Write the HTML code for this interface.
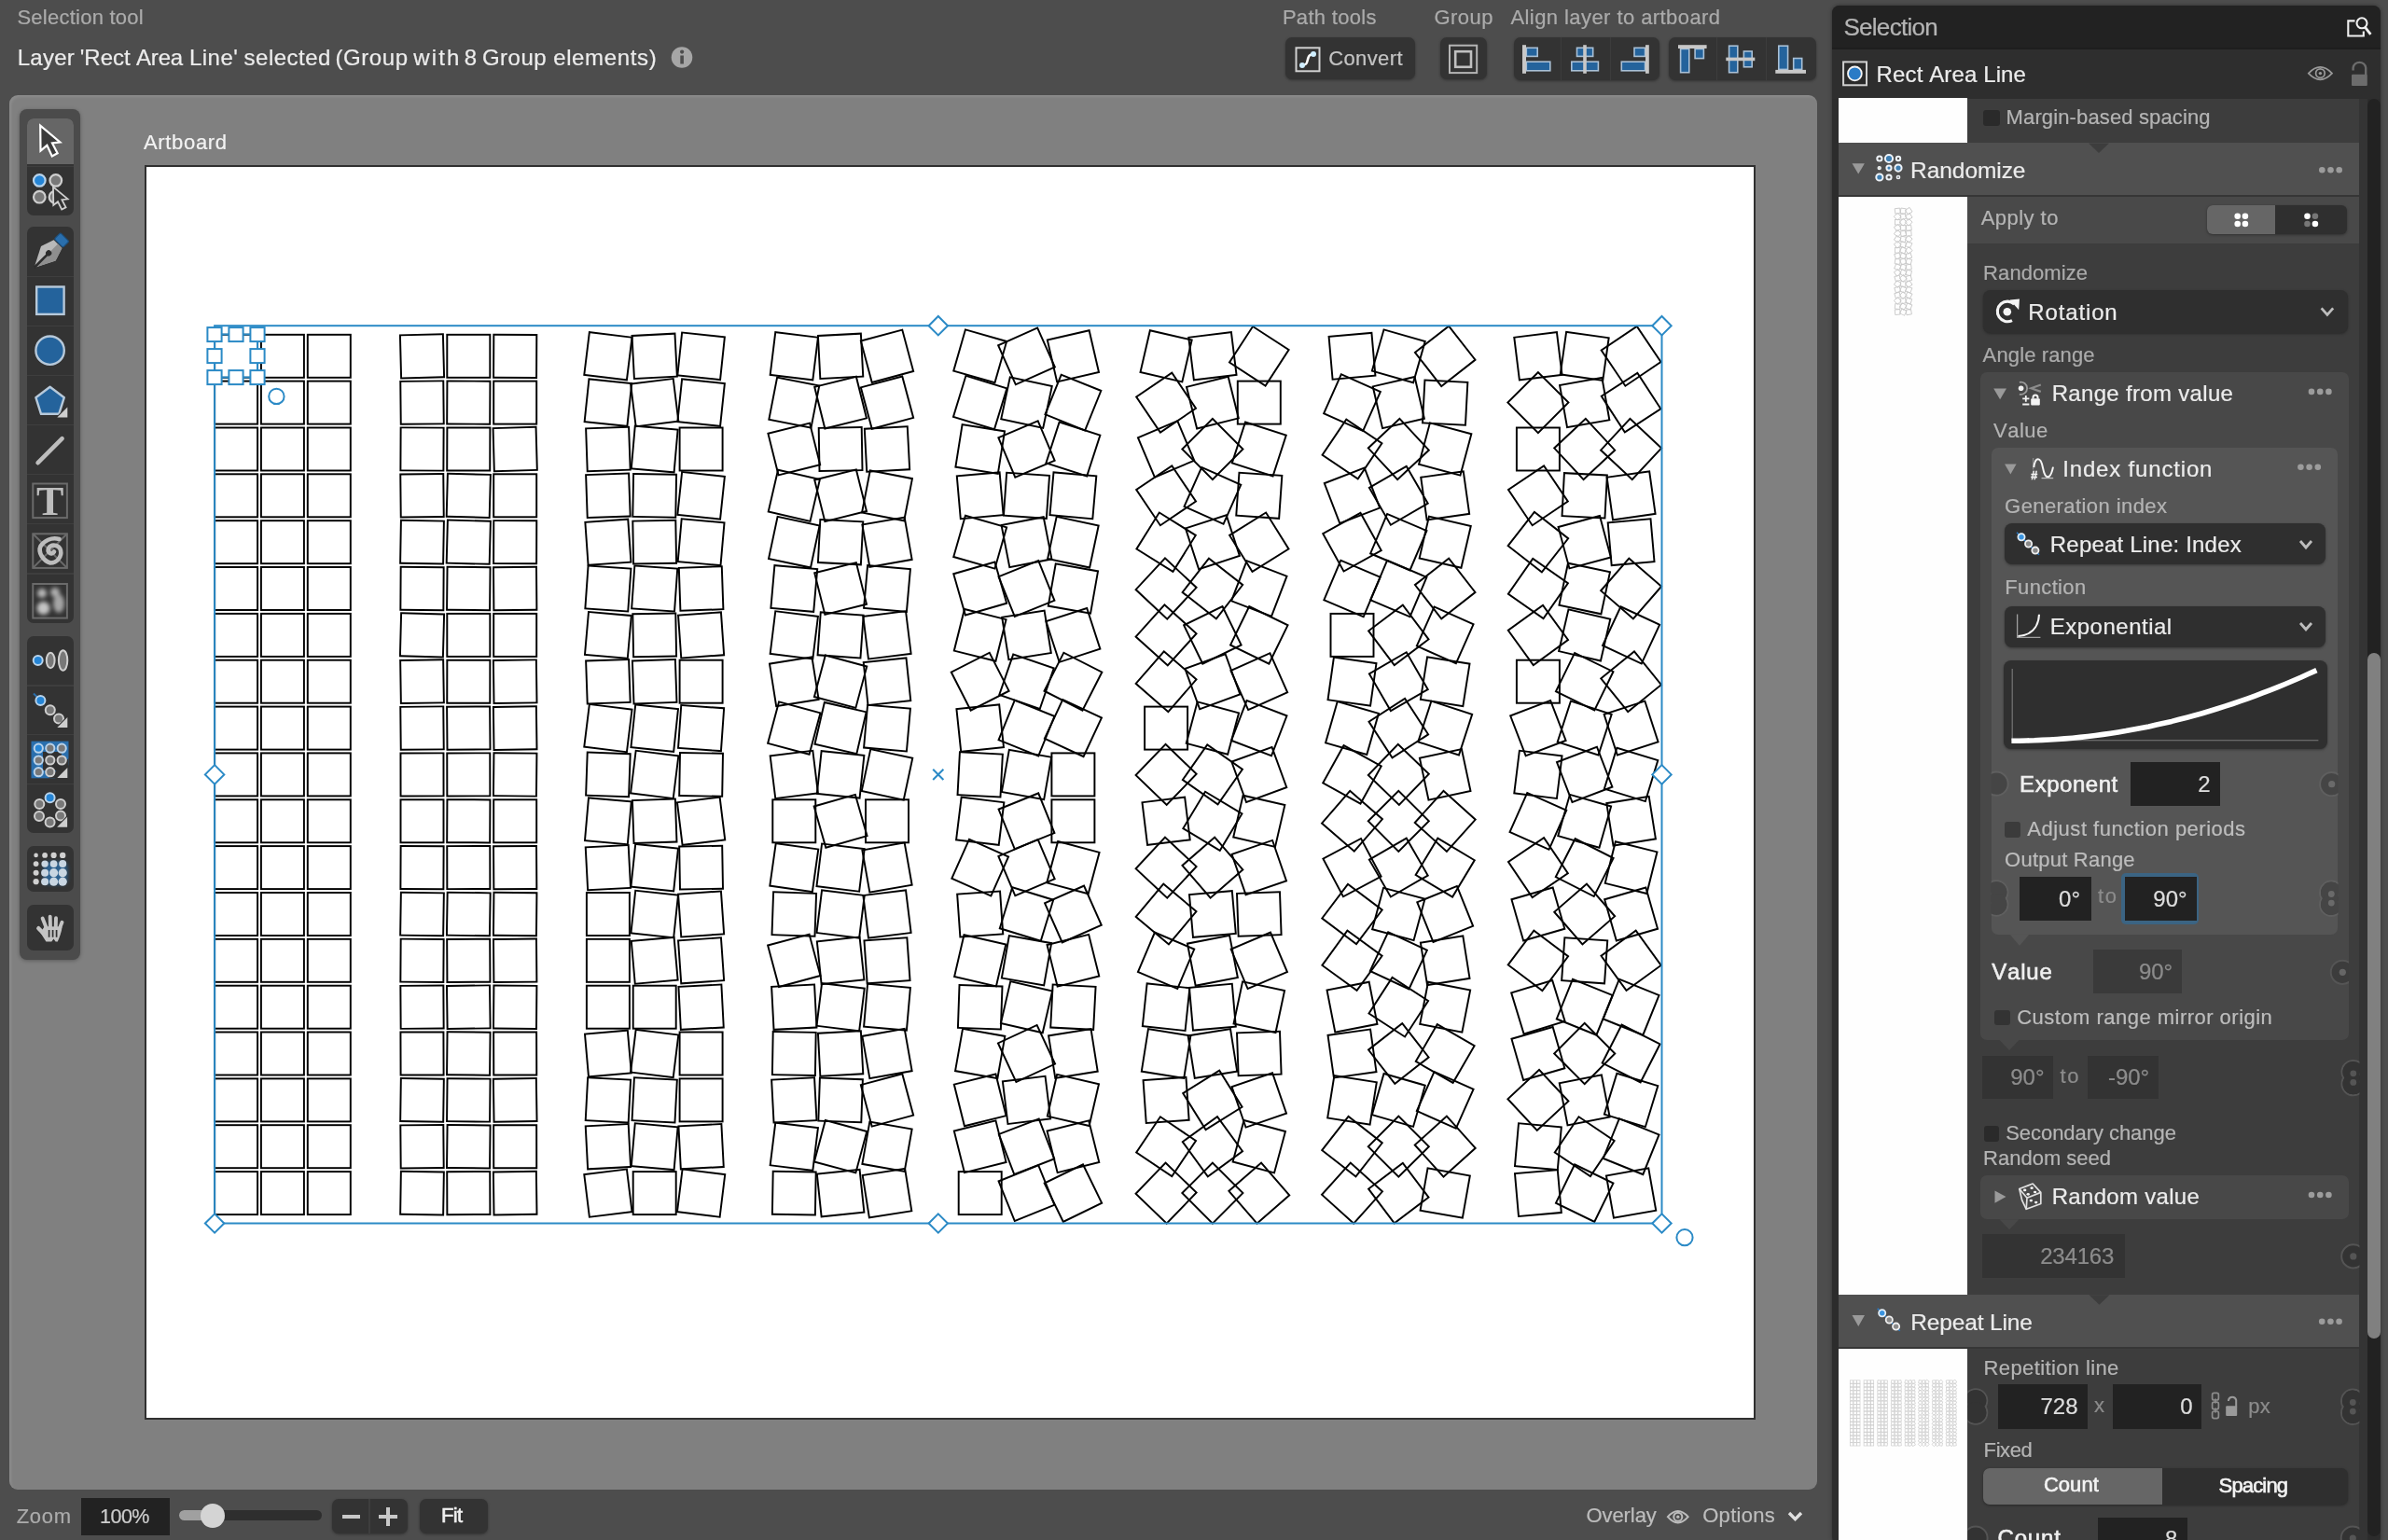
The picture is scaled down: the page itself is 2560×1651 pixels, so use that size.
<!DOCTYPE html>
<html><head><meta charset="utf-8"><title>Selection tool</title>
<style>
html,body{margin:0;padding:0;}
body{width:2560px;height:1651px;overflow:hidden;background:#4d4d4d;position:relative;
font-family:"Liberation Sans",sans-serif;font-kerning:none;}
div,svg,span{position:absolute;}
.t{white-space:pre;}
#root{left:0;top:0;width:2560px;height:1651px;will-change:transform;}
</style></head><body><div id="root">
<span class="t" style="top:-3.1px;font-size:22px;line-height:44px;color:#ababab;letter-spacing:0.25px;-webkit-text-stroke:0.22px #ababab;left:18.4px;">Selection tool</span>
<span class="t" style="left:18.7px;top:38.1px;font-size:24px;line-height:48px;color:#ececec;-webkit-text-stroke:0.22px #ececec;"><span style="position:static;display:inline-block;width:67.0px;letter-spacing:0.27px;">Layer </span><span style="position:static;display:inline-block;width:60.3px;letter-spacing:0.02px;">'Rect </span><span style="position:static;display:inline-block;width:57.0px;letter-spacing:-0.17px;">Area </span><span style="position:static;display:inline-block;width:58.6px;letter-spacing:0.46px;">Line' </span><span style="position:static;display:inline-block;width:98.0px;letter-spacing:0.50px;">selected </span><span style="position:static;display:inline-block;width:83.7px;letter-spacing:0.54px;">(Group </span><span style="position:static;display:inline-block;width:54.5px;letter-spacing:2.11px;">with </span><span style="position:static;display:inline-block;width:19.2px;letter-spacing:0.00px;">8 </span><span style="position:static;display:inline-block;width:76.2px;letter-spacing:0.50px;">Group </span><span style="position:static;display:inline-block;width:113.8px;letter-spacing:0.65px;">elements)</span></span>
<svg style="left:719.0px;top:50.0px;" width="24.0" height="24.0" viewBox="0 0 24.0 24.0"><circle cx="12" cy="11.5" r="11.3" fill="#a6a6a6"/><rect x="10.3" y="9.5" width="3.6" height="9" fill="#4d4d4d"/><circle cx="12.1" cy="5.6" r="2.1" fill="#4d4d4d"/></svg>
<span class="t" style="top:-3.2px;font-size:22px;line-height:44px;color:#ababab;letter-spacing:0.30px;-webkit-text-stroke:0.22px #ababab;left:1374.9px;">Path tools</span>
<span class="t" style="top:-3.2px;font-size:22px;line-height:44px;color:#ababab;letter-spacing:0.41px;-webkit-text-stroke:0.22px #ababab;left:1537.6px;">Group</span>
<span class="t" style="top:-3.2px;font-size:22px;line-height:44px;color:#ababab;letter-spacing:0.43px;-webkit-text-stroke:0.22px #ababab;left:1619.4px;">Align layer to artboard</span>
<div style="left:1377.5px;top:40.3px;width:139.5px;height:45.2px;background:#333333;border-radius:7px;box-shadow:0 1px 3px rgba(0,0,0,.35);"></div>
<svg style="left:1388.0px;top:50.0px;" width="28.0" height="28.0" viewBox="0 0 28.0 28.0"><rect x="1.5" y="1.3" width="25" height="25" fill="none" stroke="#d0d0d0" stroke-width="2"/><path d="M8.5 19.8 C14 19.5 13 16 14 13.5 C15 10.5 15 8.6 19.6 8.2" fill="none" stroke="#fff" stroke-width="2.6" stroke-linecap="round"/><circle cx="8" cy="20" r="3" fill="#cfeeff"/><circle cx="20" cy="8" r="3" fill="#cfeeff"/></svg>
<span class="t" style="top:40.8px;font-size:22px;line-height:44px;color:#c4c4c4;letter-spacing:0.39px;-webkit-text-stroke:0.22px #c4c4c4;left:1424.2px;">Convert</span>
<div style="left:1544.0px;top:40.3px;width:50.0px;height:45.2px;background:#333333;border-radius:7px;box-shadow:0 1px 3px rgba(0,0,0,.35);"></div>
<svg style="left:1550.0px;top:45.0px;" width="38.0" height="38.0" viewBox="0 0 38.0 38.0"><rect x="4" y="3.7" width="29.2" height="29.4" fill="none" stroke="#b4b4b4" stroke-width="2"/><rect x="10.2" y="10.2" width="16.8" height="16.6" fill="none" stroke="#c0c0c0" stroke-width="2.6"/></svg>
<div style="left:1622.6px;top:40.3px;width:156.8px;height:45.6px;background:#333333;border-radius:7px;box-shadow:0 1px 3px rgba(0,0,0,.35);"></div>
<div style="left:1789.2px;top:40.3px;width:157.5px;height:45.6px;background:#333333;border-radius:7px;box-shadow:0 1px 3px rgba(0,0,0,.35);"></div>
<div style="left:1672.6px;top:40.3px;width:1.2px;height:45.6px;background:#3c3c3c;"></div>
<div style="left:1725.8px;top:40.3px;width:1.2px;height:45.6px;background:#3c3c3c;"></div>
<div style="left:1840.0px;top:40.3px;width:1.2px;height:45.6px;background:#3c3c3c;"></div>
<div style="left:1892.7px;top:40.3px;width:1.2px;height:45.6px;background:#3c3c3c;"></div>
<svg style="left:0;top:0" width="2560" height="100" viewBox="0 0 2560 100"><rect x="1636.3" y="51.3" width="11.9" height="9.1" fill="#24639c" stroke="#a9c0d6" stroke-width="1.6"/><rect x="1636.3" y="66.2" width="25.5" height="9.6" fill="#24639c" stroke="#a9c0d6" stroke-width="1.6"/><rect x="1632.0" y="48.2" width="4.0" height="30.6" fill="#c8c8c8"/><rect x="1690.5" y="51.3" width="17.2" height="9.1" fill="#24639c" stroke="#a9c0d6" stroke-width="1.6"/><rect x="1684.8" y="66.2" width="28.6" height="9.6" fill="#24639c" stroke="#a9c0d6" stroke-width="1.6"/><rect x="1697.2" y="48.2" width="3.6" height="30.6" fill="#c8c8c8"/><rect x="1752.0" y="51.3" width="11.6" height="9.1" fill="#24639c" stroke="#a9c0d6" stroke-width="1.6"/><rect x="1738.3" y="66.2" width="25.3" height="9.6" fill="#24639c" stroke="#a9c0d6" stroke-width="1.6"/><rect x="1764.0" y="48.2" width="3.8" height="30.6" fill="#c8c8c8"/><rect x="1801.6" y="52.4" width="9.2" height="25.3" fill="#24639c" stroke="#a9c0d6" stroke-width="1.6"/><rect x="1817.1" y="52.4" width="9.3" height="10.2" fill="#24639c" stroke="#a9c0d6" stroke-width="1.6"/><rect x="1799.0" y="48.2" width="30.6" height="3.8" fill="#c8c8c8"/><rect x="1853.6" y="49.2" width="9.2" height="28.5" fill="#24639c" stroke="#a9c0d6" stroke-width="1.6"/><rect x="1869.4" y="55.0" width="8.8" height="16.8" fill="#24639c" stroke="#a9c0d6" stroke-width="1.6"/><rect x="1850.3" y="61.6" width="31.0" height="3.6" fill="#c8c8c8"/><rect x="1906.8" y="49.2" width="9.8" height="25.2" fill="#24639c" stroke="#a9c0d6" stroke-width="1.6"/><rect x="1922.7" y="62.5" width="9.0" height="11.9" fill="#24639c" stroke="#a9c0d6" stroke-width="1.6"/><rect x="1903.3" y="74.9" width="32.7" height="3.9" fill="#c8c8c8"/></svg>
<div style="left:9.5px;top:101.7px;width:1938.6px;height:1495.3px;background:#808080;border-radius:9px;box-shadow:inset 2px 2px 3px rgba(255,255,255,.10);"></div>
<span class="t" style="top:131.0px;font-size:22px;line-height:44px;color:#f2f2f2;letter-spacing:0.69px;-webkit-text-stroke:0.22px #f2f2f2;left:153.9px;">Artboard</span>
<div style="left:155.0px;top:177.0px;width:1727.0px;height:1344.5px;background:#303030;"></div>
<div style="left:157.0px;top:179.0px;width:1723.0px;height:1340.5px;background:#ffffff;"></div>
<svg style="left:0;top:0" width="1960" height="1600" viewBox="0 0 1960 1600"><g fill="none" stroke="#000" stroke-width="1.95"><rect x="230.1" y="358.8" width="46.0" height="46.0"/><rect x="279.9" y="358.8" width="46.0" height="46.0"/><rect x="329.8" y="358.8" width="46.0" height="46.0"/><rect x="230.1" y="408.6" width="46.0" height="46.0"/><rect x="279.9" y="408.6" width="46.0" height="46.0"/><rect x="329.8" y="408.6" width="46.0" height="46.0"/><rect x="230.1" y="458.5" width="46.0" height="46.0"/><rect x="279.9" y="458.5" width="46.0" height="46.0"/><rect x="329.8" y="458.5" width="46.0" height="46.0"/><rect x="230.1" y="508.3" width="46.0" height="46.0"/><rect x="279.9" y="508.3" width="46.0" height="46.0"/><rect x="329.8" y="508.3" width="46.0" height="46.0"/><rect x="230.1" y="558.2" width="46.0" height="46.0"/><rect x="279.9" y="558.2" width="46.0" height="46.0"/><rect x="329.8" y="558.2" width="46.0" height="46.0"/><rect x="230.1" y="608.0" width="46.0" height="46.0"/><rect x="279.9" y="608.0" width="46.0" height="46.0"/><rect x="329.8" y="608.0" width="46.0" height="46.0"/><rect x="230.1" y="657.9" width="46.0" height="46.0"/><rect x="279.9" y="657.9" width="46.0" height="46.0"/><rect x="329.8" y="657.9" width="46.0" height="46.0"/><rect x="230.1" y="707.7" width="46.0" height="46.0"/><rect x="279.9" y="707.7" width="46.0" height="46.0"/><rect x="329.8" y="707.7" width="46.0" height="46.0"/><rect x="230.1" y="757.6" width="46.0" height="46.0"/><rect x="279.9" y="757.6" width="46.0" height="46.0"/><rect x="329.8" y="757.6" width="46.0" height="46.0"/><rect x="230.1" y="807.4" width="46.0" height="46.0"/><rect x="279.9" y="807.4" width="46.0" height="46.0"/><rect x="329.8" y="807.4" width="46.0" height="46.0"/><rect x="230.1" y="857.3" width="46.0" height="46.0"/><rect x="279.9" y="857.3" width="46.0" height="46.0"/><rect x="329.8" y="857.3" width="46.0" height="46.0"/><rect x="230.1" y="907.1" width="46.0" height="46.0"/><rect x="279.9" y="907.1" width="46.0" height="46.0"/><rect x="329.8" y="907.1" width="46.0" height="46.0"/><rect x="230.1" y="957.0" width="46.0" height="46.0"/><rect x="279.9" y="957.0" width="46.0" height="46.0"/><rect x="329.8" y="957.0" width="46.0" height="46.0"/><rect x="230.1" y="1006.8" width="46.0" height="46.0"/><rect x="279.9" y="1006.8" width="46.0" height="46.0"/><rect x="329.8" y="1006.8" width="46.0" height="46.0"/><rect x="230.1" y="1056.7" width="46.0" height="46.0"/><rect x="279.9" y="1056.7" width="46.0" height="46.0"/><rect x="329.8" y="1056.7" width="46.0" height="46.0"/><rect x="230.1" y="1106.5" width="46.0" height="46.0"/><rect x="279.9" y="1106.5" width="46.0" height="46.0"/><rect x="329.8" y="1106.5" width="46.0" height="46.0"/><rect x="230.1" y="1156.4" width="46.0" height="46.0"/><rect x="279.9" y="1156.4" width="46.0" height="46.0"/><rect x="329.8" y="1156.4" width="46.0" height="46.0"/><rect x="230.1" y="1206.2" width="46.0" height="46.0"/><rect x="279.9" y="1206.2" width="46.0" height="46.0"/><rect x="329.8" y="1206.2" width="46.0" height="46.0"/><rect x="230.1" y="1256.1" width="46.0" height="46.0"/><rect x="279.9" y="1256.1" width="46.0" height="46.0"/><rect x="329.8" y="1256.1" width="46.0" height="46.0"/><rect x="429.5" y="358.8" width="46.0" height="46.0" transform="rotate(-1.5 452.5 381.8)"/><rect x="479.3" y="358.8" width="46.0" height="46.0"/><rect x="529.2" y="358.8" width="46.0" height="46.0" transform="rotate(0.3 552.2 381.8)"/><rect x="429.5" y="408.6" width="46.0" height="46.0" transform="rotate(-0.6 452.5 431.6)"/><rect x="479.3" y="408.6" width="46.0" height="46.0" transform="rotate(0.3 502.3 431.6)"/><rect x="529.2" y="408.6" width="46.0" height="46.0"/><rect x="429.5" y="458.5" width="46.0" height="46.0" transform="rotate(0.3 452.5 481.5)"/><rect x="479.3" y="458.5" width="46.0" height="46.0" transform="rotate(0.2 502.3 481.5)"/><rect x="529.2" y="458.5" width="46.0" height="46.0" transform="rotate(-1.6 552.2 481.5)"/><rect x="429.5" y="508.3" width="46.0" height="46.0" transform="rotate(-0.6 452.5 531.3)"/><rect x="479.3" y="508.3" width="46.0" height="46.0" transform="rotate(1.5 502.3 531.3)"/><rect x="529.2" y="508.3" width="46.0" height="46.0"/><rect x="429.5" y="558.2" width="46.0" height="46.0" transform="rotate(1.0 452.5 581.2)"/><rect x="479.3" y="558.2" width="46.0" height="46.0" transform="rotate(1.5 502.3 581.2)"/><rect x="529.2" y="558.2" width="46.0" height="46.0" transform="rotate(0.2 552.2 581.2)"/><rect x="429.5" y="608.0" width="46.0" height="46.0" transform="rotate(0.4 452.5 631.0)"/><rect x="479.3" y="608.0" width="46.0" height="46.0" transform="rotate(0.6 502.3 631.0)"/><rect x="529.2" y="608.0" width="46.0" height="46.0" transform="rotate(-0.5 552.2 631.0)"/><rect x="429.5" y="657.9" width="46.0" height="46.0" transform="rotate(1.5 452.5 680.9)"/><rect x="479.3" y="657.9" width="46.0" height="46.0"/><rect x="529.2" y="657.9" width="46.0" height="46.0"/><rect x="429.5" y="707.7" width="46.0" height="46.0" transform="rotate(-0.9 452.5 730.7)"/><rect x="479.3" y="707.7" width="46.0" height="46.0" transform="rotate(0.1 502.3 730.7)"/><rect x="529.2" y="707.7" width="46.0" height="46.0" transform="rotate(-0.8 552.2 730.7)"/><rect x="429.5" y="757.6" width="46.0" height="46.0" transform="rotate(-0.6 452.5 780.6)"/><rect x="479.3" y="757.6" width="46.0" height="46.0" transform="rotate(-0.5 502.3 780.6)"/><rect x="529.2" y="757.6" width="46.0" height="46.0" transform="rotate(-0.8 552.2 780.6)"/><rect x="429.5" y="807.4" width="46.0" height="46.0" transform="rotate(-0.1 452.5 830.4)"/><rect x="479.3" y="807.4" width="46.0" height="46.0" transform="rotate(-0.1 502.3 830.4)"/><rect x="529.2" y="807.4" width="46.0" height="46.0" transform="rotate(0.6 552.2 830.4)"/><rect x="429.5" y="857.3" width="46.0" height="46.0"/><rect x="479.3" y="857.3" width="46.0" height="46.0" transform="rotate(0.3 502.3 880.3)"/><rect x="529.2" y="857.3" width="46.0" height="46.0"/><rect x="429.5" y="907.1" width="46.0" height="46.0" transform="rotate(0.3 452.5 930.1)"/><rect x="479.3" y="907.1" width="46.0" height="46.0" transform="rotate(-0.1 502.3 930.1)"/><rect x="529.2" y="907.1" width="46.0" height="46.0" transform="rotate(-0.4 552.2 930.1)"/><rect x="429.5" y="957.0" width="46.0" height="46.0" transform="rotate(0.9 452.5 980.0)"/><rect x="479.3" y="957.0" width="46.0" height="46.0" transform="rotate(0.9 502.3 980.0)"/><rect x="529.2" y="957.0" width="46.0" height="46.0" transform="rotate(0.6 552.2 980.0)"/><rect x="429.5" y="1006.8" width="46.0" height="46.0" transform="rotate(0.4 452.5 1029.8)"/><rect x="479.3" y="1006.8" width="46.0" height="46.0" transform="rotate(-0.3 502.3 1029.8)"/><rect x="529.2" y="1006.8" width="46.0" height="46.0" transform="rotate(-0.5 552.2 1029.8)"/><rect x="429.5" y="1056.7" width="46.0" height="46.0" transform="rotate(-0.4 452.5 1079.7)"/><rect x="479.3" y="1056.7" width="46.0" height="46.0" transform="rotate(-0.8 502.3 1079.7)"/><rect x="529.2" y="1056.7" width="46.0" height="46.0" transform="rotate(0.5 552.2 1079.7)"/><rect x="429.5" y="1106.5" width="46.0" height="46.0" transform="rotate(-0.2 452.5 1129.5)"/><rect x="479.3" y="1106.5" width="46.0" height="46.0" transform="rotate(0.6 502.3 1129.5)"/><rect x="529.2" y="1106.5" width="46.0" height="46.0" transform="rotate(-0.2 552.2 1129.5)"/><rect x="429.5" y="1156.4" width="46.0" height="46.0" transform="rotate(0.8 452.5 1179.4)"/><rect x="479.3" y="1156.4" width="46.0" height="46.0" transform="rotate(0.6 502.3 1179.4)"/><rect x="529.2" y="1156.4" width="46.0" height="46.0" transform="rotate(-0.9 552.2 1179.4)"/><rect x="429.5" y="1206.2" width="46.0" height="46.0" transform="rotate(-0.5 452.5 1229.2)"/><rect x="479.3" y="1206.2" width="46.0" height="46.0" transform="rotate(0.7 502.3 1229.2)"/><rect x="529.2" y="1206.2" width="46.0" height="46.0" transform="rotate(-0.1 552.2 1229.2)"/><rect x="429.5" y="1256.1" width="46.0" height="46.0" transform="rotate(0.9 452.5 1279.1)"/><rect x="479.3" y="1256.1" width="46.0" height="46.0" transform="rotate(-0.2 502.3 1279.1)"/><rect x="529.2" y="1256.1" width="46.0" height="46.0" transform="rotate(-0.8 552.2 1279.1)"/><rect x="628.9" y="358.8" width="46.0" height="46.0" transform="rotate(7.0 651.9 381.8)"/><rect x="678.7" y="358.8" width="46.0" height="46.0" transform="rotate(-3.0 701.7 381.8)"/><rect x="728.6" y="358.8" width="46.0" height="46.0" transform="rotate(6.0 751.6 381.8)"/><rect x="628.9" y="408.6" width="46.0" height="46.0" transform="rotate(6.0 651.9 431.6)"/><rect x="678.7" y="408.6" width="46.0" height="46.0" transform="rotate(-7.0 701.7 431.6)"/><rect x="728.6" y="408.6" width="46.0" height="46.0" transform="rotate(6.0 751.6 431.6)"/><rect x="628.9" y="458.5" width="46.0" height="46.0" transform="rotate(-2.0 651.9 481.5)"/><rect x="678.7" y="458.5" width="46.0" height="46.0" transform="rotate(5.0 701.7 481.5)"/><rect x="728.6" y="458.5" width="46.0" height="46.0"/><rect x="628.9" y="508.3" width="46.0" height="46.0" transform="rotate(-2.0 651.9 531.3)"/><rect x="678.7" y="508.3" width="46.0" height="46.0" transform="rotate(1.0 701.7 531.3)"/><rect x="728.6" y="508.3" width="46.0" height="46.0" transform="rotate(6.0 751.6 531.3)"/><rect x="628.9" y="558.2" width="46.0" height="46.0" transform="rotate(-4.0 651.9 581.2)"/><rect x="678.7" y="558.2" width="46.0" height="46.0" transform="rotate(-1.0 701.7 581.2)"/><rect x="728.6" y="558.2" width="46.0" height="46.0" transform="rotate(5.0 751.6 581.2)"/><rect x="628.9" y="608.0" width="46.0" height="46.0" transform="rotate(4.0 651.9 631.0)"/><rect x="678.7" y="608.0" width="46.0" height="46.0" transform="rotate(4.0 701.7 631.0)"/><rect x="728.6" y="608.0" width="46.0" height="46.0" transform="rotate(-2.0 751.6 631.0)"/><rect x="628.9" y="657.9" width="46.0" height="46.0" transform="rotate(5.0 651.9 680.9)"/><rect x="678.7" y="657.9" width="46.0" height="46.0" transform="rotate(-1.0 701.7 680.9)"/><rect x="728.6" y="657.9" width="46.0" height="46.0" transform="rotate(-4.0 751.6 680.9)"/><rect x="628.9" y="707.7" width="46.0" height="46.0" transform="rotate(-2.0 651.9 730.7)"/><rect x="678.7" y="707.7" width="46.0" height="46.0" transform="rotate(-2.0 701.7 730.7)"/><rect x="728.6" y="707.7" width="46.0" height="46.0"/><rect x="628.9" y="757.6" width="46.0" height="46.0" transform="rotate(7.0 651.9 780.6)"/><rect x="678.7" y="757.6" width="46.0" height="46.0" transform="rotate(6.0 701.7 780.6)"/><rect x="728.6" y="757.6" width="46.0" height="46.0" transform="rotate(4.0 751.6 780.6)"/><rect x="628.9" y="807.4" width="46.0" height="46.0" transform="rotate(2.0 651.9 830.4)"/><rect x="678.7" y="807.4" width="46.0" height="46.0" transform="rotate(7.0 701.7 830.4)"/><rect x="728.6" y="807.4" width="46.0" height="46.0" transform="rotate(1.0 751.6 830.4)"/><rect x="628.9" y="857.3" width="46.0" height="46.0" transform="rotate(5.0 651.9 880.3)"/><rect x="678.7" y="857.3" width="46.0" height="46.0" transform="rotate(-2.0 701.7 880.3)"/><rect x="728.6" y="857.3" width="46.0" height="46.0" transform="rotate(-7.0 751.6 880.3)"/><rect x="628.9" y="907.1" width="46.0" height="46.0" transform="rotate(-3.0 651.9 930.1)"/><rect x="678.7" y="907.1" width="46.0" height="46.0" transform="rotate(6.0 701.7 930.1)"/><rect x="728.6" y="907.1" width="46.0" height="46.0" transform="rotate(-1.0 751.6 930.1)"/><rect x="628.9" y="957.0" width="46.0" height="46.0"/><rect x="678.7" y="957.0" width="46.0" height="46.0" transform="rotate(6.0 701.7 980.0)"/><rect x="728.6" y="957.0" width="46.0" height="46.0" transform="rotate(-4.0 751.6 980.0)"/><rect x="628.9" y="1006.8" width="46.0" height="46.0"/><rect x="678.7" y="1006.8" width="46.0" height="46.0" transform="rotate(-5.0 701.7 1029.8)"/><rect x="728.6" y="1006.8" width="46.0" height="46.0" transform="rotate(-4.0 751.6 1029.8)"/><rect x="628.9" y="1056.7" width="46.0" height="46.0"/><rect x="678.7" y="1056.7" width="46.0" height="46.0"/><rect x="728.6" y="1056.7" width="46.0" height="46.0" transform="rotate(-3.0 751.6 1079.7)"/><rect x="628.9" y="1106.5" width="46.0" height="46.0" transform="rotate(-5.0 651.9 1129.5)"/><rect x="678.7" y="1106.5" width="46.0" height="46.0" transform="rotate(7.0 701.7 1129.5)"/><rect x="728.6" y="1106.5" width="46.0" height="46.0"/><rect x="628.9" y="1156.4" width="46.0" height="46.0" transform="rotate(3.0 651.9 1179.4)"/><rect x="678.7" y="1156.4" width="46.0" height="46.0" transform="rotate(3.0 701.7 1179.4)"/><rect x="728.6" y="1156.4" width="46.0" height="46.0"/><rect x="628.9" y="1206.2" width="46.0" height="46.0" transform="rotate(-3.0 651.9 1229.2)"/><rect x="678.7" y="1206.2" width="46.0" height="46.0" transform="rotate(5.0 701.7 1229.2)"/><rect x="728.6" y="1206.2" width="46.0" height="46.0" transform="rotate(-3.0 751.6 1229.2)"/><rect x="628.9" y="1256.1" width="46.0" height="46.0" transform="rotate(-7.0 651.9 1279.1)"/><rect x="678.7" y="1256.1" width="46.0" height="46.0"/><rect x="728.6" y="1256.1" width="46.0" height="46.0" transform="rotate(7.0 751.6 1279.1)"/><rect x="828.3" y="358.8" width="46.0" height="46.0" transform="rotate(7.0 851.3 381.8)"/><rect x="878.1" y="358.8" width="46.0" height="46.0" transform="rotate(-3.0 901.1 381.8)"/><rect x="928.0" y="358.8" width="46.0" height="46.0" transform="rotate(-15.0 951.0 381.8)"/><rect x="828.3" y="408.6" width="46.0" height="46.0" transform="rotate(11.0 851.3 431.6)"/><rect x="878.1" y="408.6" width="46.0" height="46.0" transform="rotate(-14.0 901.1 431.6)"/><rect x="928.0" y="408.6" width="46.0" height="46.0" transform="rotate(-15.0 951.0 431.6)"/><rect x="828.3" y="458.5" width="46.0" height="46.0" transform="rotate(-14.0 851.3 481.5)"/><rect x="878.1" y="458.5" width="46.0" height="46.0" transform="rotate(-1.0 901.1 481.5)"/><rect x="928.0" y="458.5" width="46.0" height="46.0" transform="rotate(-3.0 951.0 481.5)"/><rect x="828.3" y="508.3" width="46.0" height="46.0" transform="rotate(13.0 851.3 531.3)"/><rect x="878.1" y="508.3" width="46.0" height="46.0" transform="rotate(-14.0 901.1 531.3)"/><rect x="928.0" y="508.3" width="46.0" height="46.0" transform="rotate(11.0 951.0 531.3)"/><rect x="828.3" y="558.2" width="46.0" height="46.0" transform="rotate(12.0 851.3 581.2)"/><rect x="878.1" y="558.2" width="46.0" height="46.0" transform="rotate(3.0 901.1 581.2)"/><rect x="928.0" y="558.2" width="46.0" height="46.0" transform="rotate(-10.0 951.0 581.2)"/><rect x="828.3" y="608.0" width="46.0" height="46.0" transform="rotate(5.0 851.3 631.0)"/><rect x="878.1" y="608.0" width="46.0" height="46.0" transform="rotate(-14.0 901.1 631.0)"/><rect x="928.0" y="608.0" width="46.0" height="46.0" transform="rotate(5.0 951.0 631.0)"/><rect x="828.3" y="657.9" width="46.0" height="46.0" transform="rotate(7.0 851.3 680.9)"/><rect x="878.1" y="657.9" width="46.0" height="46.0" transform="rotate(4.0 901.1 680.9)"/><rect x="928.0" y="657.9" width="46.0" height="46.0" transform="rotate(-7.0 951.0 680.9)"/><rect x="828.3" y="707.7" width="46.0" height="46.0" transform="rotate(-9.0 851.3 730.7)"/><rect x="878.1" y="707.7" width="46.0" height="46.0" transform="rotate(15.0 901.1 730.7)"/><rect x="928.0" y="707.7" width="46.0" height="46.0" transform="rotate(-6.0 951.0 730.7)"/><rect x="828.3" y="757.6" width="46.0" height="46.0" transform="rotate(15.0 851.3 780.6)"/><rect x="878.1" y="757.6" width="46.0" height="46.0" transform="rotate(13.0 901.1 780.6)"/><rect x="928.0" y="757.6" width="46.0" height="46.0" transform="rotate(5.0 951.0 780.6)"/><rect x="828.3" y="807.4" width="46.0" height="46.0" transform="rotate(-7.0 851.3 830.4)"/><rect x="878.1" y="807.4" width="46.0" height="46.0" transform="rotate(6.0 901.1 830.4)"/><rect x="928.0" y="807.4" width="46.0" height="46.0" transform="rotate(12.0 951.0 830.4)"/><rect x="828.3" y="857.3" width="46.0" height="46.0"/><rect x="878.1" y="857.3" width="46.0" height="46.0" transform="rotate(-16.0 901.1 880.3)"/><rect x="928.0" y="857.3" width="46.0" height="46.0"/><rect x="828.3" y="907.1" width="46.0" height="46.0" transform="rotate(8.0 851.3 930.1)"/><rect x="878.1" y="907.1" width="46.0" height="46.0" transform="rotate(7.0 901.1 930.1)"/><rect x="928.0" y="907.1" width="46.0" height="46.0" transform="rotate(-10.0 951.0 930.1)"/><rect x="828.3" y="957.0" width="46.0" height="46.0" transform="rotate(2.0 851.3 980.0)"/><rect x="878.1" y="957.0" width="46.0" height="46.0" transform="rotate(7.0 901.1 980.0)"/><rect x="928.0" y="957.0" width="46.0" height="46.0" transform="rotate(-7.0 951.0 980.0)"/><rect x="828.3" y="1006.8" width="46.0" height="46.0" transform="rotate(-15.0 851.3 1029.8)"/><rect x="878.1" y="1006.8" width="46.0" height="46.0" transform="rotate(-6.0 901.1 1029.8)"/><rect x="928.0" y="1006.8" width="46.0" height="46.0" transform="rotate(-4.0 951.0 1029.8)"/><rect x="828.3" y="1056.7" width="46.0" height="46.0" transform="rotate(-3.0 851.3 1079.7)"/><rect x="878.1" y="1056.7" width="46.0" height="46.0" transform="rotate(7.0 901.1 1079.7)"/><rect x="928.0" y="1056.7" width="46.0" height="46.0" transform="rotate(5.0 951.0 1079.7)"/><rect x="828.3" y="1106.5" width="46.0" height="46.0" transform="rotate(1.0 851.3 1129.5)"/><rect x="878.1" y="1106.5" width="46.0" height="46.0" transform="rotate(-3.0 901.1 1129.5)"/><rect x="928.0" y="1106.5" width="46.0" height="46.0" transform="rotate(-10.0 951.0 1129.5)"/><rect x="828.3" y="1156.4" width="46.0" height="46.0" transform="rotate(-3.0 851.3 1179.4)"/><rect x="878.1" y="1156.4" width="46.0" height="46.0" transform="rotate(2.0 901.1 1179.4)"/><rect x="928.0" y="1156.4" width="46.0" height="46.0" transform="rotate(-15.0 951.0 1179.4)"/><rect x="828.3" y="1206.2" width="46.0" height="46.0" transform="rotate(7.0 851.3 1229.2)"/><rect x="878.1" y="1206.2" width="46.0" height="46.0" transform="rotate(15.0 901.1 1229.2)"/><rect x="928.0" y="1206.2" width="46.0" height="46.0" transform="rotate(10.0 951.0 1229.2)"/><rect x="828.3" y="1256.1" width="46.0" height="46.0" transform="rotate(1.0 851.3 1279.1)"/><rect x="878.1" y="1256.1" width="46.0" height="46.0" transform="rotate(-6.0 901.1 1279.1)"/><rect x="928.0" y="1256.1" width="46.0" height="46.0" transform="rotate(-9.0 951.0 1279.1)"/><rect x="1027.7" y="358.8" width="46.0" height="46.0" transform="rotate(16.0 1050.7 381.8)"/><rect x="1077.5" y="358.8" width="46.0" height="46.0" transform="rotate(-24.0 1100.5 381.8)"/><rect x="1127.4" y="358.8" width="46.0" height="46.0" transform="rotate(-13.0 1150.4 381.8)"/><rect x="1027.7" y="408.6" width="46.0" height="46.0" transform="rotate(17.0 1050.7 431.6)"/><rect x="1077.5" y="408.6" width="46.0" height="46.0" transform="rotate(12.0 1100.5 431.6)"/><rect x="1127.4" y="408.6" width="46.0" height="46.0" transform="rotate(22.0 1150.4 431.6)"/><rect x="1027.7" y="458.5" width="46.0" height="46.0" transform="rotate(9.0 1050.7 481.5)"/><rect x="1077.5" y="458.5" width="46.0" height="46.0" transform="rotate(-23.0 1100.5 481.5)"/><rect x="1127.4" y="458.5" width="46.0" height="46.0" transform="rotate(18.0 1150.4 481.5)"/><rect x="1027.7" y="508.3" width="46.0" height="46.0" transform="rotate(-5.0 1050.7 531.3)"/><rect x="1077.5" y="508.3" width="46.0" height="46.0" transform="rotate(4.0 1100.5 531.3)"/><rect x="1127.4" y="508.3" width="46.0" height="46.0" transform="rotate(5.0 1150.4 531.3)"/><rect x="1027.7" y="558.2" width="46.0" height="46.0" transform="rotate(16.0 1050.7 581.2)"/><rect x="1077.5" y="558.2" width="46.0" height="46.0" transform="rotate(-11.0 1100.5 581.2)"/><rect x="1127.4" y="558.2" width="46.0" height="46.0" transform="rotate(12.0 1150.4 581.2)"/><rect x="1027.7" y="608.0" width="46.0" height="46.0" transform="rotate(-16.0 1050.7 631.0)"/><rect x="1077.5" y="608.0" width="46.0" height="46.0" transform="rotate(-22.0 1100.5 631.0)"/><rect x="1127.4" y="608.0" width="46.0" height="46.0" transform="rotate(10.0 1150.4 631.0)"/><rect x="1027.7" y="657.9" width="46.0" height="46.0" transform="rotate(14.0 1050.7 680.9)"/><rect x="1077.5" y="657.9" width="46.0" height="46.0" transform="rotate(-9.0 1100.5 680.9)"/><rect x="1127.4" y="657.9" width="46.0" height="46.0" transform="rotate(-18.0 1150.4 680.9)"/><rect x="1027.7" y="707.7" width="46.0" height="46.0" transform="rotate(-27.0 1050.7 730.7)"/><rect x="1077.5" y="707.7" width="46.0" height="46.0" transform="rotate(19.0 1100.5 730.7)"/><rect x="1127.4" y="707.7" width="46.0" height="46.0" transform="rotate(27.0 1150.4 730.7)"/><rect x="1027.7" y="757.6" width="46.0" height="46.0" transform="rotate(-6.0 1050.7 780.6)"/><rect x="1077.5" y="757.6" width="46.0" height="46.0" transform="rotate(22.0 1100.5 780.6)"/><rect x="1127.4" y="757.6" width="46.0" height="46.0" transform="rotate(25.0 1150.4 780.6)"/><rect x="1027.7" y="807.4" width="46.0" height="46.0" transform="rotate(3.0 1050.7 830.4)"/><rect x="1077.5" y="807.4" width="46.0" height="46.0" transform="rotate(10.0 1100.5 830.4)"/><rect x="1127.4" y="807.4" width="46.0" height="46.0"/><rect x="1027.7" y="857.3" width="46.0" height="46.0" transform="rotate(7.0 1050.7 880.3)"/><rect x="1077.5" y="857.3" width="46.0" height="46.0" transform="rotate(-22.0 1100.5 880.3)"/><rect x="1127.4" y="857.3" width="46.0" height="46.0"/><rect x="1027.7" y="907.1" width="46.0" height="46.0" transform="rotate(24.0 1050.7 930.1)"/><rect x="1077.5" y="907.1" width="46.0" height="46.0" transform="rotate(-23.0 1100.5 930.1)"/><rect x="1127.4" y="907.1" width="46.0" height="46.0" transform="rotate(15.0 1150.4 930.1)"/><rect x="1027.7" y="957.0" width="46.0" height="46.0" transform="rotate(-4.0 1050.7 980.0)"/><rect x="1077.5" y="957.0" width="46.0" height="46.0" transform="rotate(17.0 1100.5 980.0)"/><rect x="1127.4" y="957.0" width="46.0" height="46.0" transform="rotate(-24.0 1150.4 980.0)"/><rect x="1027.7" y="1006.8" width="46.0" height="46.0" transform="rotate(13.0 1050.7 1029.8)"/><rect x="1077.5" y="1006.8" width="46.0" height="46.0" transform="rotate(10.0 1100.5 1029.8)"/><rect x="1127.4" y="1006.8" width="46.0" height="46.0" transform="rotate(-14.0 1150.4 1029.8)"/><rect x="1027.7" y="1056.7" width="46.0" height="46.0" transform="rotate(2.0 1050.7 1079.7)"/><rect x="1077.5" y="1056.7" width="46.0" height="46.0" transform="rotate(13.0 1100.5 1079.7)"/><rect x="1127.4" y="1056.7" width="46.0" height="46.0" transform="rotate(3.0 1150.4 1079.7)"/><rect x="1027.7" y="1106.5" width="46.0" height="46.0" transform="rotate(10.0 1050.7 1129.5)"/><rect x="1077.5" y="1106.5" width="46.0" height="46.0" transform="rotate(-25.0 1100.5 1129.5)"/><rect x="1127.4" y="1106.5" width="46.0" height="46.0" transform="rotate(-9.0 1150.4 1129.5)"/><rect x="1027.7" y="1156.4" width="46.0" height="46.0" transform="rotate(-14.0 1050.7 1179.4)"/><rect x="1077.5" y="1156.4" width="46.0" height="46.0" transform="rotate(-7.0 1100.5 1179.4)"/><rect x="1127.4" y="1156.4" width="46.0" height="46.0" transform="rotate(13.0 1150.4 1179.4)"/><rect x="1027.7" y="1206.2" width="46.0" height="46.0" transform="rotate(-14.0 1050.7 1229.2)"/><rect x="1077.5" y="1206.2" width="46.0" height="46.0" transform="rotate(-21.0 1100.5 1229.2)"/><rect x="1127.4" y="1206.2" width="46.0" height="46.0" transform="rotate(-14.0 1150.4 1229.2)"/><rect x="1027.7" y="1256.1" width="46.0" height="46.0"/><rect x="1077.5" y="1256.1" width="46.0" height="46.0" transform="rotate(-22.0 1100.5 1279.1)"/><rect x="1127.4" y="1256.1" width="46.0" height="46.0" transform="rotate(-26.0 1150.4 1279.1)"/><rect x="1227.1" y="358.8" width="46.0" height="46.0" transform="rotate(13.0 1250.1 381.8)"/><rect x="1276.9" y="358.8" width="46.0" height="46.0" transform="rotate(-7.0 1299.9 381.8)"/><rect x="1326.8" y="358.8" width="46.0" height="46.0" transform="rotate(33.0 1349.8 381.8)"/><rect x="1227.1" y="408.6" width="46.0" height="46.0" transform="rotate(-34.0 1250.1 431.6)"/><rect x="1276.9" y="408.6" width="46.0" height="46.0" transform="rotate(-14.0 1299.9 431.6)"/><rect x="1326.8" y="408.6" width="46.0" height="46.0"/><rect x="1227.1" y="458.5" width="46.0" height="46.0" transform="rotate(-23.0 1250.1 481.5)"/><rect x="1276.9" y="458.5" width="46.0" height="46.0" transform="rotate(45.0 1299.9 481.5)"/><rect x="1326.8" y="458.5" width="46.0" height="46.0" transform="rotate(18.0 1349.8 481.5)"/><rect x="1227.1" y="508.3" width="46.0" height="46.0" transform="rotate(-34.0 1250.1 531.3)"/><rect x="1276.9" y="508.3" width="46.0" height="46.0" transform="rotate(24.0 1299.9 531.3)"/><rect x="1326.8" y="508.3" width="46.0" height="46.0" transform="rotate(4.0 1349.8 531.3)"/><rect x="1227.1" y="558.2" width="46.0" height="46.0" transform="rotate(32.0 1250.1 581.2)"/><rect x="1276.9" y="558.2" width="46.0" height="46.0" transform="rotate(-18.0 1299.9 581.2)"/><rect x="1326.8" y="558.2" width="46.0" height="46.0" transform="rotate(-32.0 1349.8 581.2)"/><rect x="1227.1" y="608.0" width="46.0" height="46.0" transform="rotate(43.0 1250.1 631.0)"/><rect x="1276.9" y="608.0" width="46.0" height="46.0" transform="rotate(38.0 1299.9 631.0)"/><rect x="1326.8" y="608.0" width="46.0" height="46.0" transform="rotate(21.0 1349.8 631.0)"/><rect x="1227.1" y="657.9" width="46.0" height="46.0" transform="rotate(42.0 1250.1 680.9)"/><rect x="1276.9" y="657.9" width="46.0" height="46.0" transform="rotate(-26.0 1299.9 680.9)"/><rect x="1326.8" y="657.9" width="46.0" height="46.0" transform="rotate(26.0 1349.8 680.9)"/><rect x="1227.1" y="707.7" width="46.0" height="46.0" transform="rotate(41.0 1250.1 730.7)"/><rect x="1276.9" y="707.7" width="46.0" height="46.0" transform="rotate(-20.0 1299.9 730.7)"/><rect x="1326.8" y="707.7" width="46.0" height="46.0" transform="rotate(-24.0 1349.8 730.7)"/><rect x="1227.1" y="757.6" width="46.0" height="46.0"/><rect x="1276.9" y="757.6" width="46.0" height="46.0" transform="rotate(15.0 1299.9 780.6)"/><rect x="1326.8" y="757.6" width="46.0" height="46.0" transform="rotate(21.0 1349.8 780.6)"/><rect x="1227.1" y="807.4" width="46.0" height="46.0" transform="rotate(44.0 1250.1 830.4)"/><rect x="1276.9" y="807.4" width="46.0" height="46.0" transform="rotate(35.0 1299.9 830.4)"/><rect x="1326.8" y="807.4" width="46.0" height="46.0" transform="rotate(-20.0 1349.8 830.4)"/><rect x="1227.1" y="857.3" width="46.0" height="46.0" transform="rotate(-7.0 1250.1 880.3)"/><rect x="1276.9" y="857.3" width="46.0" height="46.0" transform="rotate(31.0 1299.9 880.3)"/><rect x="1326.8" y="857.3" width="46.0" height="46.0" transform="rotate(13.0 1349.8 880.3)"/><rect x="1227.1" y="907.1" width="46.0" height="46.0" transform="rotate(43.0 1250.1 930.1)"/><rect x="1276.9" y="907.1" width="46.0" height="46.0" transform="rotate(-41.0 1299.9 930.1)"/><rect x="1326.8" y="907.1" width="46.0" height="46.0" transform="rotate(-19.0 1349.8 930.1)"/><rect x="1227.1" y="957.0" width="46.0" height="46.0" transform="rotate(40.0 1250.1 980.0)"/><rect x="1276.9" y="957.0" width="46.0" height="46.0" transform="rotate(-5.0 1299.9 980.0)"/><rect x="1326.8" y="957.0" width="46.0" height="46.0" transform="rotate(-2.0 1349.8 980.0)"/><rect x="1227.1" y="1006.8" width="46.0" height="46.0" transform="rotate(23.0 1250.1 1029.8)"/><rect x="1276.9" y="1006.8" width="46.0" height="46.0" transform="rotate(-11.0 1299.9 1029.8)"/><rect x="1326.8" y="1006.8" width="46.0" height="46.0" transform="rotate(-23.0 1349.8 1029.8)"/><rect x="1227.1" y="1056.7" width="46.0" height="46.0" transform="rotate(6.0 1250.1 1079.7)"/><rect x="1276.9" y="1056.7" width="46.0" height="46.0" transform="rotate(-5.0 1299.9 1079.7)"/><rect x="1326.8" y="1056.7" width="46.0" height="46.0" transform="rotate(12.0 1349.8 1079.7)"/><rect x="1227.1" y="1106.5" width="46.0" height="46.0" transform="rotate(9.0 1250.1 1129.5)"/><rect x="1276.9" y="1106.5" width="46.0" height="46.0" transform="rotate(-9.0 1299.9 1129.5)"/><rect x="1326.8" y="1106.5" width="46.0" height="46.0" transform="rotate(-2.0 1349.8 1129.5)"/><rect x="1227.1" y="1156.4" width="46.0" height="46.0" transform="rotate(-4.0 1250.1 1179.4)"/><rect x="1276.9" y="1156.4" width="46.0" height="46.0" transform="rotate(-32.0 1299.9 1179.4)"/><rect x="1326.8" y="1156.4" width="46.0" height="46.0" transform="rotate(-19.0 1349.8 1179.4)"/><rect x="1227.1" y="1206.2" width="46.0" height="46.0" transform="rotate(34.0 1250.1 1229.2)"/><rect x="1276.9" y="1206.2" width="46.0" height="46.0" transform="rotate(-36.0 1299.9 1229.2)"/><rect x="1326.8" y="1206.2" width="46.0" height="46.0" transform="rotate(15.0 1349.8 1229.2)"/><rect x="1227.1" y="1256.1" width="46.0" height="46.0" transform="rotate(44.0 1250.1 1279.1)"/><rect x="1276.9" y="1256.1" width="46.0" height="46.0" transform="rotate(45.0 1299.9 1279.1)"/><rect x="1326.8" y="1256.1" width="46.0" height="46.0" transform="rotate(-41.0 1349.8 1279.1)"/><rect x="1426.5" y="358.8" width="46.0" height="46.0" transform="rotate(-5.0 1449.5 381.8)"/><rect x="1476.3" y="358.8" width="46.0" height="46.0" transform="rotate(16.0 1499.3 381.8)"/><rect x="1526.2" y="358.8" width="46.0" height="46.0" transform="rotate(-38.0 1549.2 381.8)"/><rect x="1426.5" y="408.6" width="46.0" height="46.0" transform="rotate(24.0 1449.5 431.6)"/><rect x="1476.3" y="408.6" width="46.0" height="46.0" transform="rotate(-13.0 1499.3 431.6)"/><rect x="1526.2" y="408.6" width="46.0" height="46.0" transform="rotate(3.0 1549.2 431.6)"/><rect x="1426.5" y="458.5" width="46.0" height="46.0" transform="rotate(34.0 1449.5 481.5)"/><rect x="1476.3" y="458.5" width="46.0" height="46.0" transform="rotate(-43.0 1499.3 481.5)"/><rect x="1526.2" y="458.5" width="46.0" height="46.0" transform="rotate(15.0 1549.2 481.5)"/><rect x="1426.5" y="508.3" width="46.0" height="46.0" transform="rotate(-21.0 1449.5 531.3)"/><rect x="1476.3" y="508.3" width="46.0" height="46.0" transform="rotate(-30.0 1499.3 531.3)"/><rect x="1526.2" y="508.3" width="46.0" height="46.0" transform="rotate(-8.0 1549.2 531.3)"/><rect x="1426.5" y="558.2" width="46.0" height="46.0" transform="rotate(-29.0 1449.5 581.2)"/><rect x="1476.3" y="558.2" width="46.0" height="46.0" transform="rotate(23.0 1499.3 581.2)"/><rect x="1526.2" y="558.2" width="46.0" height="46.0" transform="rotate(13.0 1549.2 581.2)"/><rect x="1426.5" y="608.0" width="46.0" height="46.0" transform="rotate(23.0 1449.5 631.0)"/><rect x="1476.3" y="608.0" width="46.0" height="46.0" transform="rotate(23.0 1499.3 631.0)"/><rect x="1526.2" y="608.0" width="46.0" height="46.0" transform="rotate(-38.0 1549.2 631.0)"/><rect x="1426.5" y="657.9" width="46.0" height="46.0"/><rect x="1476.3" y="657.9" width="46.0" height="46.0" transform="rotate(-37.0 1499.3 680.9)"/><rect x="1526.2" y="657.9" width="46.0" height="46.0" transform="rotate(24.0 1549.2 680.9)"/><rect x="1426.5" y="707.7" width="46.0" height="46.0" transform="rotate(8.0 1449.5 730.7)"/><rect x="1476.3" y="707.7" width="46.0" height="46.0" transform="rotate(-30.0 1499.3 730.7)"/><rect x="1526.2" y="707.7" width="46.0" height="46.0" transform="rotate(9.0 1549.2 730.7)"/><rect x="1426.5" y="757.6" width="46.0" height="46.0" transform="rotate(16.0 1449.5 780.6)"/><rect x="1476.3" y="757.6" width="46.0" height="46.0" transform="rotate(-33.0 1499.3 780.6)"/><rect x="1526.2" y="757.6" width="46.0" height="46.0" transform="rotate(18.0 1549.2 780.6)"/><rect x="1426.5" y="807.4" width="46.0" height="46.0" transform="rotate(29.0 1449.5 830.4)"/><rect x="1476.3" y="807.4" width="46.0" height="46.0" transform="rotate(44.0 1499.3 830.4)"/><rect x="1526.2" y="807.4" width="46.0" height="46.0" transform="rotate(-12.0 1549.2 830.4)"/><rect x="1426.5" y="857.3" width="46.0" height="46.0" transform="rotate(41.0 1449.5 880.3)"/><rect x="1476.3" y="857.3" width="46.0" height="46.0" transform="rotate(45.0 1499.3 880.3)"/><rect x="1526.2" y="857.3" width="46.0" height="46.0" transform="rotate(42.0 1549.2 880.3)"/><rect x="1426.5" y="907.1" width="46.0" height="46.0" transform="rotate(-28.0 1449.5 930.1)"/><rect x="1476.3" y="907.1" width="46.0" height="46.0" transform="rotate(-30.0 1499.3 930.1)"/><rect x="1526.2" y="907.1" width="46.0" height="46.0" transform="rotate(31.0 1549.2 930.1)"/><rect x="1426.5" y="957.0" width="46.0" height="46.0" transform="rotate(37.0 1449.5 980.0)"/><rect x="1476.3" y="957.0" width="46.0" height="46.0" transform="rotate(15.0 1499.3 980.0)"/><rect x="1526.2" y="957.0" width="46.0" height="46.0" transform="rotate(-22.0 1549.2 980.0)"/><rect x="1426.5" y="1006.8" width="46.0" height="46.0" transform="rotate(36.0 1449.5 1029.8)"/><rect x="1476.3" y="1006.8" width="46.0" height="46.0" transform="rotate(25.0 1499.3 1029.8)"/><rect x="1526.2" y="1006.8" width="46.0" height="46.0" transform="rotate(-9.0 1549.2 1029.8)"/><rect x="1426.5" y="1056.7" width="46.0" height="46.0" transform="rotate(-11.0 1449.5 1079.7)"/><rect x="1476.3" y="1056.7" width="46.0" height="46.0" transform="rotate(33.0 1499.3 1079.7)"/><rect x="1526.2" y="1056.7" width="46.0" height="46.0" transform="rotate(11.0 1549.2 1079.7)"/><rect x="1426.5" y="1106.5" width="46.0" height="46.0" transform="rotate(-8.0 1449.5 1129.5)"/><rect x="1476.3" y="1106.5" width="46.0" height="46.0" transform="rotate(-38.0 1499.3 1129.5)"/><rect x="1526.2" y="1106.5" width="46.0" height="46.0" transform="rotate(30.0 1549.2 1129.5)"/><rect x="1426.5" y="1156.4" width="46.0" height="46.0" transform="rotate(9.0 1449.5 1179.4)"/><rect x="1476.3" y="1156.4" width="46.0" height="46.0" transform="rotate(16.0 1499.3 1179.4)"/><rect x="1526.2" y="1156.4" width="46.0" height="46.0" transform="rotate(24.0 1549.2 1179.4)"/><rect x="1426.5" y="1206.2" width="46.0" height="46.0" transform="rotate(38.0 1449.5 1229.2)"/><rect x="1476.3" y="1206.2" width="46.0" height="46.0" transform="rotate(45.0 1499.3 1229.2)"/><rect x="1526.2" y="1206.2" width="46.0" height="46.0" transform="rotate(-42.0 1549.2 1229.2)"/><rect x="1426.5" y="1256.1" width="46.0" height="46.0" transform="rotate(42.0 1449.5 1279.1)"/><rect x="1476.3" y="1256.1" width="46.0" height="46.0" transform="rotate(-37.0 1499.3 1279.1)"/><rect x="1526.2" y="1256.1" width="46.0" height="46.0" transform="rotate(10.0 1549.2 1279.1)"/><rect x="1625.9" y="358.8" width="46.0" height="46.0" transform="rotate(-7.0 1648.9 381.8)"/><rect x="1675.7" y="358.8" width="46.0" height="46.0" transform="rotate(8.0 1698.7 381.8)"/><rect x="1725.6" y="358.8" width="46.0" height="46.0" transform="rotate(-34.0 1748.6 381.8)"/><rect x="1625.9" y="408.6" width="46.0" height="46.0" transform="rotate(45.0 1648.9 431.6)"/><rect x="1675.7" y="408.6" width="46.0" height="46.0" transform="rotate(-10.0 1698.7 431.6)"/><rect x="1725.6" y="408.6" width="46.0" height="46.0" transform="rotate(-33.0 1748.6 431.6)"/><rect x="1625.9" y="458.5" width="46.0" height="46.0"/><rect x="1675.7" y="458.5" width="46.0" height="46.0" transform="rotate(-43.0 1698.7 481.5)"/><rect x="1725.6" y="458.5" width="46.0" height="46.0" transform="rotate(43.0 1748.6 481.5)"/><rect x="1625.9" y="508.3" width="46.0" height="46.0" transform="rotate(-34.0 1648.9 531.3)"/><rect x="1675.7" y="508.3" width="46.0" height="46.0" transform="rotate(3.0 1698.7 531.3)"/><rect x="1725.6" y="508.3" width="46.0" height="46.0" transform="rotate(-8.0 1748.6 531.3)"/><rect x="1625.9" y="558.2" width="46.0" height="46.0" transform="rotate(38.0 1648.9 581.2)"/><rect x="1675.7" y="558.2" width="46.0" height="46.0" transform="rotate(-15.0 1698.7 581.2)"/><rect x="1725.6" y="558.2" width="46.0" height="46.0" transform="rotate(-5.0 1748.6 581.2)"/><rect x="1625.9" y="608.0" width="46.0" height="46.0" transform="rotate(35.0 1648.9 631.0)"/><rect x="1675.7" y="608.0" width="46.0" height="46.0" transform="rotate(12.0 1698.7 631.0)"/><rect x="1725.6" y="608.0" width="46.0" height="46.0" transform="rotate(41.0 1748.6 631.0)"/><rect x="1625.9" y="657.9" width="46.0" height="46.0" transform="rotate(-36.0 1648.9 680.9)"/><rect x="1675.7" y="657.9" width="46.0" height="46.0" transform="rotate(13.0 1698.7 680.9)"/><rect x="1725.6" y="657.9" width="46.0" height="46.0" transform="rotate(25.0 1748.6 680.9)"/><rect x="1625.9" y="707.7" width="46.0" height="46.0"/><rect x="1675.7" y="707.7" width="46.0" height="46.0" transform="rotate(26.0 1698.7 730.7)"/><rect x="1725.6" y="707.7" width="46.0" height="46.0" transform="rotate(-39.0 1748.6 730.7)"/><rect x="1625.9" y="757.6" width="46.0" height="46.0" transform="rotate(-21.0 1648.9 780.6)"/><rect x="1675.7" y="757.6" width="46.0" height="46.0" transform="rotate(18.0 1698.7 780.6)"/><rect x="1725.6" y="757.6" width="46.0" height="46.0" transform="rotate(-18.0 1748.6 780.6)"/><rect x="1625.9" y="807.4" width="46.0" height="46.0" transform="rotate(7.0 1648.9 830.4)"/><rect x="1675.7" y="807.4" width="46.0" height="46.0" transform="rotate(-21.0 1698.7 830.4)"/><rect x="1725.6" y="807.4" width="46.0" height="46.0" transform="rotate(17.0 1748.6 830.4)"/><rect x="1625.9" y="857.3" width="46.0" height="46.0" transform="rotate(24.0 1648.9 880.3)"/><rect x="1675.7" y="857.3" width="46.0" height="46.0" transform="rotate(16.0 1698.7 880.3)"/><rect x="1725.6" y="857.3" width="46.0" height="46.0" transform="rotate(-9.0 1748.6 880.3)"/><rect x="1625.9" y="907.1" width="46.0" height="46.0" transform="rotate(-34.0 1648.9 930.1)"/><rect x="1675.7" y="907.1" width="46.0" height="46.0" transform="rotate(27.0 1698.7 930.1)"/><rect x="1725.6" y="907.1" width="46.0" height="46.0" transform="rotate(14.0 1748.6 930.1)"/><rect x="1625.9" y="957.0" width="46.0" height="46.0" transform="rotate(-16.0 1648.9 980.0)"/><rect x="1675.7" y="957.0" width="46.0" height="46.0" transform="rotate(-41.0 1698.7 980.0)"/><rect x="1725.6" y="957.0" width="46.0" height="46.0" transform="rotate(-16.0 1748.6 980.0)"/><rect x="1625.9" y="1006.8" width="46.0" height="46.0" transform="rotate(37.0 1648.9 1029.8)"/><rect x="1675.7" y="1006.8" width="46.0" height="46.0" transform="rotate(4.0 1698.7 1029.8)"/><rect x="1725.6" y="1006.8" width="46.0" height="46.0" transform="rotate(-36.0 1748.6 1029.8)"/><rect x="1625.9" y="1056.7" width="46.0" height="46.0" transform="rotate(-17.0 1648.9 1079.7)"/><rect x="1675.7" y="1056.7" width="46.0" height="46.0" transform="rotate(22.0 1698.7 1079.7)"/><rect x="1725.6" y="1056.7" width="46.0" height="46.0" transform="rotate(22.0 1748.6 1079.7)"/><rect x="1625.9" y="1106.5" width="46.0" height="46.0" transform="rotate(-16.0 1648.9 1129.5)"/><rect x="1675.7" y="1106.5" width="46.0" height="46.0" transform="rotate(45.0 1698.7 1129.5)"/><rect x="1725.6" y="1106.5" width="46.0" height="46.0" transform="rotate(27.0 1748.6 1129.5)"/><rect x="1625.9" y="1156.4" width="46.0" height="46.0" transform="rotate(-43.0 1648.9 1179.4)"/><rect x="1675.7" y="1156.4" width="46.0" height="46.0" transform="rotate(-11.0 1698.7 1179.4)"/><rect x="1725.6" y="1156.4" width="46.0" height="46.0" transform="rotate(17.0 1748.6 1179.4)"/><rect x="1625.9" y="1206.2" width="46.0" height="46.0" transform="rotate(5.0 1648.9 1229.2)"/><rect x="1675.7" y="1206.2" width="46.0" height="46.0" transform="rotate(34.0 1698.7 1229.2)"/><rect x="1725.6" y="1206.2" width="46.0" height="46.0" transform="rotate(22.0 1748.6 1229.2)"/><rect x="1625.9" y="1256.1" width="46.0" height="46.0" transform="rotate(-5.0 1648.9 1279.1)"/><rect x="1675.7" y="1256.1" width="46.0" height="46.0" transform="rotate(26.0 1698.7 1279.1)"/><rect x="1725.6" y="1256.1" width="46.0" height="46.0" transform="rotate(-10.0 1748.6 1279.1)"/></g><rect x="230.1" y="349.2" width="1551.4" height="962.3" fill="none" stroke="#2b8ac6" stroke-width="2"/><path d="M995.6 349.2L1005.8 339.0L1016.0 349.2L1005.8 359.4Z" fill="#fff" stroke="#2b8ac6" stroke-width="2"/><path d="M1771.3 349.2L1781.5 339.0L1791.7 349.2L1781.5 359.4Z" fill="#fff" stroke="#2b8ac6" stroke-width="2"/><path d="M219.9 830.4L230.1 820.1L240.3 830.4L230.1 840.6Z" fill="#fff" stroke="#2b8ac6" stroke-width="2"/><path d="M1771.3 830.4L1781.5 820.1L1791.7 830.4L1781.5 840.6Z" fill="#fff" stroke="#2b8ac6" stroke-width="2"/><path d="M219.9 1311.5L230.1 1301.3L240.3 1311.5L230.1 1321.7Z" fill="#fff" stroke="#2b8ac6" stroke-width="2"/><path d="M995.6 1311.5L1005.8 1301.3L1016.0 1311.5L1005.8 1321.7Z" fill="#fff" stroke="#2b8ac6" stroke-width="2"/><path d="M1771.3 1311.5L1781.5 1301.3L1791.7 1311.5L1781.5 1321.7Z" fill="#fff" stroke="#2b8ac6" stroke-width="2"/><path d="M1000.2 824.8l11.2 11.2M1011.4 824.8l-11.2 11.2" stroke="#2b8ac6" stroke-width="2" fill="none"/><circle cx="1806" cy="1326.7" r="8.6" fill="#fff" stroke="#2b8ac6" stroke-width="2"/><circle cx="296.4" cy="424.9" r="8.2" fill="#fff" stroke="#2b8ac6" stroke-width="2"/><rect x="230" y="358.5" width="46" height="46" fill="none" stroke="#2b8ac6" stroke-width="2"/><rect x="222.4" y="351.1" width="15.2" height="15" fill="#fff" stroke="#2b8ac6" stroke-width="2"/><rect x="222.4" y="374.1" width="15.2" height="15" fill="#fff" stroke="#2b8ac6" stroke-width="2"/><rect x="222.4" y="397.1" width="15.2" height="15" fill="#fff" stroke="#2b8ac6" stroke-width="2"/><rect x="245.4" y="351.1" width="15.2" height="15" fill="#fff" stroke="#2b8ac6" stroke-width="2"/><rect x="245.4" y="397.1" width="15.2" height="15" fill="#fff" stroke="#2b8ac6" stroke-width="2"/><rect x="268.4" y="351.1" width="15.2" height="15" fill="#fff" stroke="#2b8ac6" stroke-width="2"/><rect x="268.4" y="374.1" width="15.2" height="15" fill="#fff" stroke="#2b8ac6" stroke-width="2"/><rect x="268.4" y="397.1" width="15.2" height="15" fill="#fff" stroke="#2b8ac6" stroke-width="2"/></svg>
<div style="left:21.3px;top:117.2px;width:64.6px;height:911.8px;background:#4b4b4b;border-radius:8px;box-shadow:0 1px 4px rgba(0,0,0,.3);"></div>
<div style="left:28.8px;top:126.5px;width:50.3px;height:104.1px;background:#333333;border-radius:7px;"></div>
<div style="left:28.8px;top:178.0px;width:50.3px;height:1.4px;background:#3e3e3e;"></div>
<div style="left:28.8px;top:243.0px;width:50.3px;height:425.0px;background:#333333;border-radius:7px;"></div>
<div style="left:28.8px;top:295.5px;width:50.3px;height:1.4px;background:#3e3e3e;"></div>
<div style="left:28.8px;top:348.6px;width:50.3px;height:1.4px;background:#3e3e3e;"></div>
<div style="left:28.8px;top:401.8px;width:50.3px;height:1.4px;background:#3e3e3e;"></div>
<div style="left:28.8px;top:454.9px;width:50.3px;height:1.4px;background:#3e3e3e;"></div>
<div style="left:28.8px;top:508.0px;width:50.3px;height:1.4px;background:#3e3e3e;"></div>
<div style="left:28.8px;top:561.1px;width:50.3px;height:1.4px;background:#3e3e3e;"></div>
<div style="left:28.8px;top:614.3px;width:50.3px;height:1.4px;background:#3e3e3e;"></div>
<div style="left:28.8px;top:682.3px;width:50.3px;height:210.5px;background:#333333;border-radius:7px;"></div>
<div style="left:28.8px;top:734.3px;width:50.3px;height:1.4px;background:#3e3e3e;"></div>
<div style="left:28.8px;top:786.9px;width:50.3px;height:1.4px;background:#3e3e3e;"></div>
<div style="left:28.8px;top:839.6px;width:50.3px;height:1.4px;background:#3e3e3e;"></div>
<div style="left:28.8px;top:907.0px;width:50.3px;height:48.8px;background:#333333;border-radius:7px;"></div>
<div style="left:28.8px;top:970.0px;width:50.3px;height:49.3px;background:#333333;border-radius:7px;"></div>
<div style="left:28.8px;top:126.5px;width:50.3px;height:49.6px;background:#666666;border-radius:7px 7px 0 0;"></div>
<svg style="left:0;top:0" width="100" height="1040" viewBox="0 0 100 1040"><defs><filter id="bl" x="-30%" y="-30%" width="160%" height="160%"><feGaussianBlur stdDeviation="2"/></filter><filter id="bl2" x="-30%" y="-30%" width="160%" height="160%"><feGaussianBlur stdDeviation="2.2"/></filter></defs><path d="M43.2 134.6 L43.5 161.6 L50.4 155.8 L55.8 167.4 L61.6 164.2 L56 153.4 L64.4 152.4 Z" fill="#3a3a3a" stroke="#fff" stroke-width="2.2" stroke-linejoin="miter"/><circle cx="42.3" cy="193.4" r="6.3" fill="#2585d6" stroke="#b9d3ea" stroke-width="2.2"/><circle cx="59.8" cy="193.4" r="6.3" fill="#787878" stroke="#cfcfcf" stroke-width="2.2"/><circle cx="42.3" cy="211.2" r="6.3" fill="#787878" stroke="#cfcfcf" stroke-width="2.2"/><circle cx="59" cy="211.2" r="6.3" fill="#787878" stroke="#cfcfcf" stroke-width="2.2"/><path d="M57 200.4 L57.3 220 L62 216.2 L66.2 224.6 L70.6 222.4 L66.4 214.2 L72.6 213.4 Z" fill="#333" stroke="#cfcfcf" stroke-width="1.8"/><g transform="translate(52.6 271) rotate(45) scale(1.16)"><rect x="-5.6" y="-20.5" width="11.2" height="8" rx="1.5" fill="#2a6fad" stroke="#1d4f7c" stroke-width="1"/><path d="M-5.4 -11.5 L5.4 -11.5 L9.5 1 L0 19.5 L-9.5 1 Z" fill="#b9b9b9"/><path d="M0 -11.5 L5.4 -11.5 L9.5 1 L0 19.5 Z" fill="#8f8f8f"/><path d="M0 19.5 L0 2" stroke="#2c2c2c" stroke-width="2.2"/><circle cx="0" cy="0.5" r="2.7" fill="#2c2c2c"/></g><rect x="39.2" y="307.5" width="29.4" height="29.4" fill="#24639c" stroke="#b7c9da" stroke-width="2.4"/><circle cx="53.6" cy="375.7" r="15.2" fill="#24639c" stroke="#b7c9da" stroke-width="2.4"/><path d="M53.6 414.8 L68.8 426.2 L63.2 443.8 L44 443.8 L38.4 426.2 Z" fill="#24639c" stroke="#b7c9da" stroke-width="2.4" stroke-linejoin="round"/><path d="M73.8 433.6 L73.8 449.1 L58.3 449.1 Z" fill="#333"/><path d="M72.3 436.6 L72.3 447.6 L61.3 447.6 Z" fill="#cfcfcf"/><path d="M40.6 496.2 L66.6 470.2" stroke="#bdbdbd" stroke-width="4.6" stroke-linecap="round"/><rect x="35.3" y="518.5" width="36.6" height="36.6" fill="none" stroke="#6a6a6a" stroke-width="2"/><text x="53.6" y="551.8" text-anchor="middle" font-family="Liberation Serif,serif" font-weight="700" font-size="44" fill="#bdbdbd">T</text><rect x="35.3" y="572.3" width="36.6" height="36.6" fill="none" stroke="#6a6a6a" stroke-width="2"/><path d="M35.3 572.3 L71.9 608.9 M71.9 572.3 L35.3 608.9" stroke="#6a6a6a" stroke-width="2"/><path d="M63.5 578 C55 575.5 47 580 43.5 585.5 C40.5 592 46 601 54 603.5 C61 603.5 66.5 597 65 590 C63.5 584 55 582.5 52 588 C50.5 592.5 55.5 595.5 58 591.5" fill="none" stroke="#bdbdbd" stroke-width="4.6" stroke-linecap="round" stroke-linejoin="round"/><rect x="35.3" y="626" width="36.6" height="36.6" fill="none" stroke="#6a6a6a" stroke-width="2"/><g filter="url(#bl)"><circle cx="45" cy="636" r="5" fill="#b5b5b5"/><circle cx="59" cy="635" r="5" fill="#adadad"/><circle cx="46.5" cy="652" r="7" fill="#c4c4c4"/><ellipse cx="63" cy="647" rx="6" ry="10" fill="#a5a5a5"/></g><circle cx="40.7" cy="708" r="5" fill="#2585d6" stroke="#b9d3ea" stroke-width="2"/><ellipse cx="54.2" cy="708" rx="4.4" ry="8.2" fill="#787878" stroke="#cfcfcf" stroke-width="2"/><ellipse cx="67.6" cy="708" rx="4.7" ry="10.8" fill="#787878" stroke="#cfcfcf" stroke-width="2"/><path d="M36 743.5 L41 748.5" stroke="#2a6fad" stroke-width="2"/><circle cx="43.4" cy="750.9" r="5" fill="#2585d6" stroke="#b9d3ea" stroke-width="2"/><circle cx="53.8" cy="761.2" r="5" fill="#787878" stroke="#cfcfcf" stroke-width="2"/><circle cx="63" cy="770.6" r="5" fill="#787878" stroke="#cfcfcf" stroke-width="2"/><path d="M73.8 766 L73.8 781.5 L58.3 781.5 Z" fill="#333"/><path d="M72.3 769 L72.3 780 L61.3 780 Z" fill="#cfcfcf"/><rect x="33.5" y="794.6" width="40" height="39.7" fill="#2a6fad"/><path d="M52 834.3 L73.5 813 L73.5 834.3 Z" fill="#333"/><rect x="46" y="806" width="20" height="20" fill="#303030"/><circle cx="41.3" cy="802.2" r="4.6" fill="#2585d6" stroke="#b9d3ea" stroke-width="2"/><circle cx="41.3" cy="815" r="4.6" fill="#787878" stroke="#b9d3ea" stroke-width="2"/><circle cx="41.3" cy="827.7" r="4.6" fill="#787878" stroke="#b9d3ea" stroke-width="2"/><circle cx="53.8" cy="802.2" r="4.6" fill="#787878" stroke="#b9d3ea" stroke-width="2"/><circle cx="53.8" cy="815" r="4.6" fill="#787878" stroke="#cfcfcf" stroke-width="2"/><circle cx="53.8" cy="827.7" r="4.6" fill="#787878" stroke="#cfcfcf" stroke-width="2"/><circle cx="66.2" cy="802.2" r="4.6" fill="#787878" stroke="#b9d3ea" stroke-width="2"/><circle cx="66.2" cy="815" r="4.6" fill="#787878" stroke="#cfcfcf" stroke-width="2"/><path d="M73.8 820 L73.8 835.5 L58.3 835.5 Z" fill="#333"/><path d="M72.3 823 L72.3 834 L61.3 834 Z" fill="#cfcfcf"/><circle cx="53.6" cy="855.3" r="5" fill="#2585d6" stroke="#b9d3ea" stroke-width="2"/><circle cx="42.3" cy="862.1" r="5" fill="#787878" stroke="#cfcfcf" stroke-width="2"/><circle cx="65" cy="862.1" r="5" fill="#787878" stroke="#cfcfcf" stroke-width="2"/><circle cx="42" cy="875.1" r="5" fill="#787878" stroke="#cfcfcf" stroke-width="2"/><circle cx="53.6" cy="881.6" r="5" fill="#787878" stroke="#cfcfcf" stroke-width="2"/><circle cx="65" cy="874.4" r="5" fill="#787878" stroke="#cfcfcf" stroke-width="2"/><path d="M73.6 872.8 L73.6 888.3 L58.099999999999994 888.3 Z" fill="#333"/><path d="M72.1 875.8 L72.1 886.8 L61.099999999999994 886.8 Z" fill="#cfcfcf"/><g filter="url(#bl2)" opacity="0.75"><rect x="47" y="924" width="25" height="24" rx="6" fill="#2a6fad"/></g><circle cx="38.6" cy="916.9" r="2.3" fill="#d0d0d0"/><circle cx="48.1" cy="916.9" r="2.9" fill="#d0d0d0"/><circle cx="57.6" cy="916.9" r="3.1" fill="#d0d0d0"/><circle cx="67.2" cy="916.9" r="3.2" fill="#d0d0d0"/><circle cx="38.6" cy="926.1" r="2.9" fill="#d0d0d0"/><circle cx="48.1" cy="926.1" r="3.7" fill="#c9d6e2"/><circle cx="57.6" cy="926.1" r="3.9" fill="#c9d6e2"/><circle cx="67.2" cy="926.1" r="4.0" fill="#c9d6e2"/><circle cx="38.6" cy="935.7" r="3.0" fill="#d0d0d0"/><circle cx="48.1" cy="935.7" r="4.0" fill="#c9d6e2"/><circle cx="57.6" cy="935.7" r="4.6" fill="#c9d6e2"/><circle cx="67.2" cy="935.7" r="4.6" fill="#c9d6e2"/><circle cx="38.6" cy="945.2" r="3.1" fill="#d0d0d0"/><circle cx="48.1" cy="945.2" r="4.0" fill="#c9d6e2"/><circle cx="57.6" cy="945.2" r="4.6" fill="#c9d6e2"/><circle cx="67.2" cy="945.2" r="4.6" fill="#c9d6e2"/><g stroke="#c4c4c4" stroke-width="3.9" stroke-linecap="round" fill="none"><path d="M45.6 984.6 L50.2 996"/><path d="M53.7 982.6 L54 996"/><path d="M60 984.3 L59.7 996"/><path d="M66.5 988.8 L63.2 997"/><path d="M41.3 995.2 L50 1004" stroke-width="4.4"/></g><path d="M47.6 993.2 L66.6 993.4 C66.2 999 63.6 1005 61.8 1009.6 L59.6 1009.6 L57.5 1006.4 L55.3 1009.6 L49.4 1009.6 L43.4 1000 Z" fill="#c4c4c4"/><path d="M52.6 997 V1004.8 M56.6 997 V1004.8 M60.6 997 V1004.8" stroke="#333" stroke-width="1.7"/></svg>
<span class="t" style="top:1603.8px;font-size:22px;line-height:44px;color:#ababab;letter-spacing:0.69px;-webkit-text-stroke:0.22px #ababab;left:17.7px;">Zoom</span>
<div style="left:86.5px;top:1605.5px;width:95.3px;height:40.5px;background:#222222;"></div>
<span class="t" style="top:1604.7px;font-size:21.5px;line-height:43.0px;color:#cdcdcd;letter-spacing:-0.56px;-webkit-text-stroke:0.22px #cdcdcd;left:107.1px;">100%</span>
<div style="left:192.0px;top:1618.7px;width:153.4px;height:11.2px;background:#2e2e2e;border-radius:6px;"></div>
<div style="left:192.0px;top:1618.7px;width:40.0px;height:11.2px;background:#a0a0a0;border-radius:6px;"></div>
<div style="left:214.9px;top:1612.0px;width:26.4px;height:26.4px;background:#d4d4d4;border-radius:14px;"></div>
<div style="left:356.2px;top:1607.0px;width:80.6px;height:36.8px;background:#333333;border-radius:7px;box-shadow:0 1px 3px rgba(0,0,0,.35);"></div>
<div style="left:395.4px;top:1607.0px;width:1.2px;height:36.8px;background:#3e3e3e;"></div>
<div style="left:366.5px;top:1623.8px;width:19.0px;height:4.0px;background:#c8c8c8;"></div>
<div style="left:406.2px;top:1623.8px;width:19.4px;height:4.0px;background:#c8c8c8;"></div>
<div style="left:413.9px;top:1616.0px;width:4.0px;height:19.6px;background:#c8c8c8;"></div>
<div style="left:450.0px;top:1607.0px;width:73.3px;height:36.8px;background:#333333;border-radius:7px;box-shadow:0 1px 3px rgba(0,0,0,.35);"></div>
<span class="t" style="top:1603.2px;font-size:22px;line-height:44px;color:#f0f0f0;letter-spacing:-0.57px;-webkit-text-stroke:0.6px #f0f0f0;left:472.9px;">Fit</span>
<span class="t" style="top:1603.3px;font-size:22px;line-height:44px;color:#bdbdbd;letter-spacing:-0.08px;-webkit-text-stroke:0.22px #bdbdbd;left:1700.5px;">Overlay</span>
<svg style="left:1780.0px;top:1610.0px;" width="40.0" height="32.0" viewBox="0 0 40.0 32.0"><path d="M7.9 16.2 Q18.8 3.8 29.7 16.2 Q18.8 28.6 7.9 16.2 Z" fill="none" stroke="#bdbdbd" stroke-width="2"/><circle cx="18.8" cy="16.2" r="4.5" fill="none" stroke="#bdbdbd" stroke-width="2"/><circle cx="18.8" cy="16.2" r="1.6" fill="#bdbdbd"/></svg>
<span class="t" style="top:1603.3px;font-size:22px;line-height:44px;color:#bdbdbd;letter-spacing:0.31px;-webkit-text-stroke:0.22px #bdbdbd;left:1825.2px;">Options</span>
<svg style="left:1910.0px;top:1612.0px;" width="30.0" height="26.0" viewBox="0 0 30.0 26.0"><path d="M8 10 L14.5 16.6 L21 10" fill="none" stroke="#e0e0e0" stroke-width="3.4"/></svg>
<div style="left:1964.0px;top:6.0px;width:588.0px;height:1650.0px;background:#2c2c2c;border-radius:8px;box-shadow:0 0 4px rgba(0,0,0,.4);"></div>
<div style="left:1964.0px;top:6.0px;width:588.0px;height:46.3px;background:#222222;border-radius:8px 8px 0 0;"></div>
<div style="left:1964.0px;top:51.3px;width:588.0px;height:2.0px;background:#1e1e1e;"></div>
<div style="left:1964.0px;top:53.0px;width:588.0px;height:52.6px;background:#2e2e2e;"></div>
<span class="t" style="top:3.2px;font-size:26px;line-height:52px;color:#b4b4b4;letter-spacing:-0.70px;-webkit-text-stroke:0.22px #b4b4b4;left:1976.4px;">Selection</span>
<span class="t" style="top:55.5px;font-size:24px;line-height:48px;color:#ececec;letter-spacing:0.12px;-webkit-text-stroke:0.22px #ececec;left:2011.6px;">Rect Area Line</span>
<div style="left:2529.4px;top:105.6px;width:8.2px;height:1560.0px;background:#343434;"></div>
<div style="left:2537.5px;top:105.8px;width:14.5px;height:1541.5px;background:#222222;border-radius:7px;"></div>
<div style="left:2537.5px;top:699.7px;width:14.5px;height:735.2px;background:#808080;border-radius:7px;"></div>
<div style="left:1971.0px;top:105.1px;width:138.4px;height:1560.0px;background:#fefefe;"></div>
<div style="left:2109.4px;top:105.6px;width:420.0px;height:1560.0px;background:#3d3d3d;"></div>
<div style="left:2126.3px;top:117.9px;width:17.4px;height:17.4px;background:#2a2a2a;border-radius:3px;"></div>
<span class="t" style="top:104.4px;font-size:22px;line-height:44px;color:#b4b4b4;letter-spacing:0.13px;-webkit-text-stroke:0.22px #b4b4b4;left:2150.6px;">Margin-based spacing</span>
<div style="left:1971.0px;top:153.4px;width:558.4px;height:56.4px;background:#505050;"></div>
<div style="left:1971.0px;top:209.4px;width:558.4px;height:1.7px;background:#363636;"></div>
<div style="left:1971.0px;top:1388.3px;width:558.4px;height:56.3px;background:#505050;"></div>
<div style="left:1971.0px;top:1444.2px;width:558.4px;height:1.7px;background:#363636;"></div>
<span class="t" style="top:157.9px;font-size:24.5px;line-height:49.0px;color:#ececec;letter-spacing:-0.07px;-webkit-text-stroke:0.22px #ececec;left:2048.1px;">Randomize</span>
<span class="t" style="top:1393.1px;font-size:24.5px;line-height:49.0px;color:#ececec;letter-spacing:-0.16px;-webkit-text-stroke:0.22px #ececec;left:2048.3px;">Repeat Line</span>
<div style="left:2109.4px;top:211.2px;width:420.0px;height:49.5px;background:#494949;"></div>
<span class="t" style="top:211.8px;font-size:22px;line-height:44px;color:#b4b4b4;letter-spacing:0.46px;-webkit-text-stroke:0.22px #b4b4b4;left:2123.7px;">Apply to</span>
<div style="left:2366.2px;top:220.3px;width:149.5px;height:31.2px;background:#2f2f2f;border-radius:6px;box-shadow:0 1px 3px rgba(0,0,0,.35);"></div>
<div style="left:2366.2px;top:220.3px;width:73.0px;height:31.2px;background:#666666;border-radius:6px 0 0 6px;"></div>
<span class="t" style="top:271.4px;font-size:22px;line-height:44px;color:#ababab;letter-spacing:0.09px;-webkit-text-stroke:0.22px #ababab;left:2126.1px;">Randomize</span>
<div style="left:2126.0px;top:311.3px;width:391.0px;height:46.2px;background:#2f2f2f;border-radius:8px;box-shadow:0 1px 3px rgba(0,0,0,.35);"></div>
<span class="t" style="top:310.7px;font-size:24px;line-height:48px;color:#ececec;letter-spacing:0.86px;-webkit-text-stroke:0.22px #ececec;left:2174.3px;">Rotation</span>
<span class="t" style="top:359.1px;font-size:22px;line-height:44px;color:#ababab;letter-spacing:0.13px;-webkit-text-stroke:0.22px #ababab;left:2125.6px;">Angle range</span>
<div style="left:2122.7px;top:399.3px;width:395.3px;height:715.8px;background:#484848;border-radius:7px;"></div>
<span class="t" style="top:398.2px;font-size:24px;line-height:48px;color:#ececec;letter-spacing:0.32px;-webkit-text-stroke:0.22px #ececec;left:2199.7px;">Range from value</span>
<span class="t" style="top:439.7px;font-size:22px;line-height:44px;color:#b4b4b4;letter-spacing:0.47px;-webkit-text-stroke:0.22px #b4b4b4;left:2137.1px;">Value</span>
<div style="left:2134.7px;top:479.5px;width:371.8px;height:522.3px;background:#555555;border-radius:7px;"></div>
<span class="t" style="top:478.6px;font-size:24px;line-height:48px;color:#ececec;letter-spacing:0.82px;-webkit-text-stroke:0.22px #ececec;left:2211.3px;">Index function</span>
<span class="t" style="top:520.6px;font-size:22px;line-height:44px;color:#b4b4b4;letter-spacing:0.42px;-webkit-text-stroke:0.22px #b4b4b4;left:2149.1px;">Generation index</span>
<div style="left:2149.1px;top:561.4px;width:343.9px;height:44.0px;background:#2f2f2f;border-radius:8px;box-shadow:0 1px 3px rgba(0,0,0,.35);"></div>
<span class="t" style="top:559.9px;font-size:24px;line-height:48px;color:#ececec;letter-spacing:0.20px;-webkit-text-stroke:0.22px #ececec;left:2197.8px;">Repeat Line: Index</span>
<span class="t" style="top:608.4px;font-size:22px;line-height:44px;color:#b4b4b4;letter-spacing:0.36px;-webkit-text-stroke:0.22px #b4b4b4;left:2149.3px;">Function</span>
<div style="left:2149.1px;top:649.8px;width:343.9px;height:44.2px;background:#2f2f2f;border-radius:8px;box-shadow:0 1px 3px rgba(0,0,0,.35);"></div>
<span class="t" style="top:648.2px;font-size:24px;line-height:48px;color:#ececec;letter-spacing:0.49px;-webkit-text-stroke:0.22px #ececec;left:2197.8px;">Exponential</span>
<div style="left:2148.2px;top:707.8px;width:346.7px;height:95.6px;background:#2f2f2f;border-radius:8px;box-shadow:0 1px 3px rgba(0,0,0,.35);"></div>
<span class="t" style="top:816.7px;font-size:24px;line-height:48px;color:#f0f0f0;letter-spacing:0.54px;-webkit-text-stroke:0.6px #f0f0f0;left:2165.1px;">Exponent</span>
<div style="left:2284.0px;top:817.2px;width:95.7px;height:47.2px;background:#222222;"></div>
<span class="t" style="top:816.7px;font-size:24px;line-height:48px;color:#dedede;-webkit-text-stroke:0.22px #dedede;right:190.3px;">2</span>
<div style="left:2149.1px;top:881.4px;width:17.4px;height:16.6px;background:#3b3b3b;border-radius:3px;"></div>
<span class="t" style="top:867.2px;font-size:22px;line-height:44px;color:#bdbdbd;letter-spacing:0.51px;-webkit-text-stroke:0.22px #bdbdbd;left:2173.3px;">Adjust function periods</span>
<span class="t" style="top:900.0px;font-size:22px;line-height:44px;color:#bdbdbd;letter-spacing:0.23px;-webkit-text-stroke:0.22px #bdbdbd;left:2149.1px;">Output Range</span>
<div style="left:2165.1px;top:940.2px;width:76.5px;height:46.6px;background:#222222;"></div>
<span class="t" style="top:939.7px;font-size:24px;line-height:48px;color:#dedede;-webkit-text-stroke:0.22px #dedede;right:330.0px;">0°</span>
<span class="t" style="top:939.1px;font-size:22px;line-height:44px;color:#8c8c8c;letter-spacing:1.85px;-webkit-text-stroke:0.22px #8c8c8c;left:2248.9px;">to</span>
<div style="left:2274.3px;top:936.3px;width:82.9px;height:54.9px;background:#3b6483;border-radius:5px;"></div>
<div style="left:2278.2px;top:940.2px;width:76.5px;height:46.6px;background:#222222;"></div>
<span class="t" style="top:939.7px;font-size:24px;line-height:48px;color:#dedede;-webkit-text-stroke:0.22px #dedede;right:215.4px;">90°</span>
<span class="t" style="top:1017.7px;font-size:24px;line-height:48px;color:#f0f0f0;letter-spacing:0.80px;-webkit-text-stroke:0.6px #f0f0f0;left:2135.2px;">Value</span>
<div style="left:2243.5px;top:1018.2px;width:95.7px;height:47.2px;background:#3a3a3a;"></div>
<span class="t" style="top:1017.7px;font-size:24px;line-height:48px;color:#8c8c8c;-webkit-text-stroke:0.22px #8c8c8c;right:230.8px;">90°</span>
<div style="left:2137.6px;top:1082.8px;width:17.3px;height:16.5px;background:#333333;border-radius:3px;"></div>
<span class="t" style="top:1068.6px;font-size:22px;line-height:44px;color:#bdbdbd;letter-spacing:0.48px;-webkit-text-stroke:0.22px #bdbdbd;left:2162.2px;">Custom range mirror origin</span>
<div style="left:2125.0px;top:1131.5px;width:76.1px;height:46.8px;background:#333333;"></div>
<span class="t" style="top:1130.6px;font-size:24px;line-height:48px;color:#8c8c8c;-webkit-text-stroke:0.22px #8c8c8c;right:368.5px;">90°</span>
<span class="t" style="top:1131.8px;font-size:22px;line-height:44px;color:#8c8c8c;letter-spacing:1.85px;-webkit-text-stroke:0.22px #8c8c8c;left:2208.4px;">to</span>
<div style="left:2238.3px;top:1131.5px;width:75.9px;height:46.8px;background:#333333;"></div>
<span class="t" style="top:1130.6px;font-size:24px;line-height:48px;color:#8c8c8c;-webkit-text-stroke:0.22px #8c8c8c;right:255.8px;">-90°</span>
<div style="left:2126.6px;top:1207.2px;width:16.7px;height:16.8px;background:#2a2a2a;border-radius:3px;"></div>
<span class="t" style="top:1193.0px;font-size:22px;line-height:44px;color:#b4b4b4;letter-spacing:-0.05px;-webkit-text-stroke:0.22px #b4b4b4;left:2150.2px;">Secondary change</span>
<span class="t" style="top:1220.0px;font-size:22px;line-height:44px;color:#b4b4b4;-webkit-text-stroke:0.22px #b4b4b4;left:2126.1px;">Random seed</span>
<div style="left:2123.1px;top:1260.2px;width:394.9px;height:47.2px;background:#484848;border-radius:7px;"></div>
<span class="t" style="top:1258.7px;font-size:24px;line-height:48px;color:#ececec;letter-spacing:0.31px;-webkit-text-stroke:0.22px #ececec;left:2199.7px;">Random value</span>
<div style="left:2125.4px;top:1323.4px;width:152.2px;height:46.6px;background:#333333;"></div>
<span class="t" style="top:1322.9px;font-size:24px;line-height:48px;color:#8c8c8c;letter-spacing:-0.18px;-webkit-text-stroke:0.22px #8c8c8c;left:2187.2px;">234163</span>
<span class="t" style="top:1444.5px;font-size:22px;line-height:44px;color:#b4b4b4;letter-spacing:0.38px;-webkit-text-stroke:0.22px #b4b4b4;left:2126.6px;">Repetition line</span>
<div style="left:2142.1px;top:1484.3px;width:95.6px;height:47.4px;background:#222222;"></div>
<span class="t" style="top:1483.7px;font-size:24px;line-height:48px;color:#dedede;-webkit-text-stroke:0.22px #dedede;right:332.5px;">728</span>
<span class="t" style="top:1485.4px;font-size:22px;line-height:44px;color:#8c8c8c;-webkit-text-stroke:0.22px #8c8c8c;left:2245.1px;">x</span>
<div style="left:2265.2px;top:1484.3px;width:95.0px;height:47.4px;background:#222222;"></div>
<span class="t" style="top:1483.7px;font-size:24px;line-height:48px;color:#dedede;-webkit-text-stroke:0.22px #dedede;right:209.5px;">0</span>
<span class="t" style="top:1485.7px;font-size:22px;line-height:44px;color:#8c8c8c;letter-spacing:0.16px;-webkit-text-stroke:0.22px #8c8c8c;left:2410.3px;">px</span>
<span class="t" style="top:1532.5px;font-size:22px;line-height:44px;color:#b4b4b4;letter-spacing:-0.40px;-webkit-text-stroke:0.22px #b4b4b4;left:2126.6px;">Fixed</span>
<div style="left:2126.3px;top:1574.0px;width:390.5px;height:39.2px;background:#2f2f2f;border-radius:7px;box-shadow:0 1px 3px rgba(0,0,0,.35);"></div>
<div style="left:2126.3px;top:1574.0px;width:192.1px;height:39.2px;background:#666666;border-radius:7px 0 0 7px;"></div>
<span class="t" style="top:1570.4px;font-size:22px;line-height:44px;color:#f4f4f4;letter-spacing:0.05px;-webkit-text-stroke:0.6px #f4f4f4;left:2190.9px;">Count</span>
<span class="t" style="top:1570.7px;font-size:22px;line-height:44px;color:#f4f4f4;letter-spacing:-0.85px;-webkit-text-stroke:0.6px #f4f4f4;left:2378.6px;">Spacing</span>
<span class="t" style="top:1625.3px;font-size:24px;line-height:48px;color:#f0f0f0;letter-spacing:0.79px;-webkit-text-stroke:0.6px #f0f0f0;left:2141.6px;">Count</span>
<div style="left:2249.4px;top:1626.5px;width:95.3px;height:40.0px;background:#222222;"></div>
<span class="t" style="top:1625.7px;font-size:24px;line-height:48px;color:#dedede;-webkit-text-stroke:0.22px #dedede;right:225.7px;">8</span>
<svg style="left:0;top:0" width="2560" height="1651" viewBox="0 0 2560 1651"><defs><clipPath id="c1"><rect x="2134.7" y="0" width="30.0" height="1700"/></clipPath><clipPath id="c2"><rect x="2479.7" y="0" width="26.800000000000182" height="1700"/></clipPath><clipPath id="c3"><rect x="2134.7" y="0" width="30.0" height="1700"/></clipPath><clipPath id="c4"><rect x="2479.3" y="0" width="27.199999999999818" height="1700"/></clipPath><clipPath id="c5"><rect x="2491.3" y="0" width="26.699999999999818" height="1700"/></clipPath><clipPath id="c6"><rect x="2502.8" y="0" width="26.59999999999991" height="1700"/></clipPath><clipPath id="c7"><rect x="2502.8" y="0" width="26.59999999999991" height="1700"/></clipPath><clipPath id="c8"><rect x="2109.4" y="0" width="30.0" height="1700"/></clipPath><clipPath id="c9"><rect x="2502.3" y="0" width="27.09999999999991" height="1700"/></clipPath><clipPath id="c10"><rect x="2109.4" y="0" width="30.0" height="1700"/></clipPath><clipPath id="c11"><rect x="2502.3" y="0" width="27.09999999999991" height="1700"/></clipPath></defs><path d="M2239 153.4 L2261 153.4 L2250 163.9 Z" fill="#3d3d3d"/><path d="M2239.5 1388.3 L2261.5 1388.3 L2250.5 1398.8 Z" fill="#3d3d3d"/><path d="M2154.5 1001.6 L2175.5 1001.6 L2165 1014.1 Z" fill="#555555"/><path d="M2143.5 1114.9 L2164.5 1114.9 L2154 1125.9 Z" fill="#484848"/><path d="M2143.5 1307.2 L2164.5 1307.2 L2154 1318.2 Z" fill="#484848"/><circle cx="2489.3" cy="182.2" r="3.3" fill="#9c9c9c"/><circle cx="2498.5" cy="182.2" r="3.3" fill="#9c9c9c"/><circle cx="2507.7" cy="182.2" r="3.3" fill="#9c9c9c"/><circle cx="2478.0" cy="419.9" r="3.3" fill="#9c9c9c"/><circle cx="2487.2" cy="419.9" r="3.3" fill="#9c9c9c"/><circle cx="2496.4" cy="419.9" r="3.3" fill="#9c9c9c"/><circle cx="2466.4" cy="500.7" r="3.3" fill="#9c9c9c"/><circle cx="2475.6" cy="500.7" r="3.3" fill="#9c9c9c"/><circle cx="2484.8" cy="500.7" r="3.3" fill="#9c9c9c"/><circle cx="2478.0" cy="1281" r="3.3" fill="#9c9c9c"/><circle cx="2487.2" cy="1281" r="3.3" fill="#9c9c9c"/><circle cx="2496.4" cy="1281" r="3.3" fill="#9c9c9c"/><circle cx="2489.2" cy="1416.8" r="3.3" fill="#9c9c9c"/><circle cx="2498.4" cy="1416.8" r="3.3" fill="#9c9c9c"/><circle cx="2507.6" cy="1416.8" r="3.3" fill="#9c9c9c"/><path d="M1985.5 175.3 L1998.9 175.3 L1992.2 186.6 Z" fill="#9a9a9a"/><path d="M2137.2 416.6 L2151 416.6 L2144.1 428.2 Z" fill="#9a9a9a"/><path d="M2149.1 497.4 L2161.6 497.4 L2155.35 508.4 Z" fill="#9a9a9a"/><path d="M1985.5 1410 L1999 1410 L1992.25 1421.9 Z" fill="#9a9a9a"/><path d="M2138.5 1276.6 L2150.5 1283.1 L2138.5 1289.7 Z" fill="#9a9a9a"/><path d="M2488.6 330.4 L2494.8999999999996 337.4 L2501.2 330.4" fill="none" stroke="#bdbdbd" stroke-width="2.8"/><path d="M2466 580 L2472.0 587 L2478 580" fill="none" stroke="#bdbdbd" stroke-width="2.8"/><path d="M2466 668 L2472.0 674.8 L2478 668" fill="none" stroke="#bdbdbd" stroke-width="2.8"/><path d="M2524.5 22.4 L2517.3 22.4 L2517.3 38.5 L2533.8 38.5 L2533.8 33.5" fill="none" stroke="#f0f0f0" stroke-width="2.1"/><circle cx="2532" cy="24.8" r="5.5" fill="none" stroke="#f0f0f0" stroke-width="2.1"/><path d="M2535.6 29.4 L2541.4 36.8" stroke="#f0f0f0" stroke-width="2.8"/><rect x="1976.1" y="66.4" width="24.9" height="24.9" fill="#2a2a2a" stroke="#d0d0d0" stroke-width="2"/><circle cx="1988.4" cy="78.9" r="7.4" fill="#2a7bc6" stroke="#f4f4f4" stroke-width="1.8"/><path d="M2474.8 78.6 Q2487.4 65.2 2500.0 78.6 Q2487.4 92.0 2474.8 78.6 Z" fill="none" stroke="#9a9a9a" stroke-width="1.7"/><circle cx="2487.4" cy="78.6" r="4.8" fill="none" stroke="#9a9a9a" stroke-width="1.7"/><circle cx="2487.4" cy="78.6" r="1.7" fill="#9a9a9a"/><rect x="2521" y="79.7" width="16.8" height="12.2" rx="1" fill="#6c6c6c"/><path d="M2522.6 75.4 V72.6 A6.9 6.9 0 0 1 2536.2 72.6 V80" fill="none" stroke="#6c6c6c" stroke-width="2.4"/><circle cx="2014.9" cy="170" r="2.6" fill="#505050" stroke="#eef3f8" stroke-width="2.0"/><circle cx="2025" cy="170" r="4.1" fill="#3d7eb2" stroke="#eef3f8" stroke-width="2.0"/><circle cx="2035" cy="170" r="2.2" fill="#505050" stroke="#eef3f8" stroke-width="2.0"/><circle cx="2014.7" cy="180.1" r="1.6" fill="#e0e0d0" stroke="#eef3f8" stroke-width="1.2"/><circle cx="2025" cy="180.1" r="2.6" fill="#3d7eb2" stroke="#eef3f8" stroke-width="2.0"/><circle cx="2035" cy="180.1" r="3.6" fill="#3d7eb2" stroke="#eef3f8" stroke-width="2.0"/><circle cx="2014.9" cy="190" r="3.6" fill="#3d7eb2" stroke="#eef3f8" stroke-width="2.0"/><circle cx="2025" cy="190" r="2.6" fill="#505050" stroke="#eef3f8" stroke-width="2.0"/><circle cx="2035" cy="190" r="1.6" fill="#505050" stroke="#eef3f8" stroke-width="1.5"/><circle cx="2398.7" cy="231.7" r="3.3" fill="#fff"/><circle cx="2406.9" cy="231.7" r="3.3" fill="#fff"/><circle cx="2398.7" cy="240" r="3.3" fill="#fff"/><circle cx="2406.9" cy="240" r="3.3" fill="#fff"/><circle cx="2473.5" cy="231.7" r="3.3" fill="#fff"/><circle cx="2481.9" cy="231.7" r="3.3" fill="#777"/><circle cx="2473.5" cy="240" r="3.3" fill="#777"/><circle cx="2481.9" cy="240" r="3.3" fill="#fff"/><path d="M2157 343.6 A10.8 10.8 0 1 1 2159.4 326" fill="none" stroke="#f4f4f4" stroke-width="3.1"/><path d="M2154.6 321.6 L2165 320.6 L2164.2 332.2 Z" fill="#f4f4f4"/><circle cx="2151.8" cy="334.2" r="4.3" fill="#f4f4f4"/><circle cx="2166.6" cy="416.2" r="2.8" fill="#f0f0f0"/><path d="M2164.9 409.8 A6.6 6.6 0 1 1 2164.9 422.6" fill="none" stroke="#9a9a9a" stroke-width="1.8"/><path d="M2187.8 412.5 L2177.4 416.2 L2187.8 419.9" fill="none" stroke="#8c8c8c" stroke-width="2.2"/><path d="M2168.2 427.4 H2175.4 M2171.8 424 V430.8 M2168.2 433.5 H2175.4" stroke="#f0f0f0" stroke-width="1.8"/><rect x="2177.2" y="427.2" width="9.6" height="7.4" rx="1" fill="#f4f4f4"/><path d="M2179.5 427.6 V426 A2.5 2.5 0 0 1 2184.5 426 V427.6" fill="none" stroke="#f4f4f4" stroke-width="2"/><path d="M2179.6 491 V503.6" stroke="#8a8a8a" stroke-width="1.2"/><path d="M2180.3 501 C2182 489.4 2187.6 489.4 2190 501.5 C2192.6 514.7 2198 514.7 2201 500.6" fill="none" stroke="#f4f4f4" stroke-width="2"/><path d="M2188.5 512.6 H2201.2" stroke="#bdbdbd" stroke-width="1.3"/><text x="2177.2" y="513.6" font-size="12.5" font-weight="700" stroke="#f4f4f4" stroke-width="0.4" fill="#f4f4f4" font-family="Liberation Sans,sans-serif">#</text><path d="M2162.0 570.8 L2186.0 594.8" stroke="#2a7bc6" stroke-width="1.6"/><circle cx="2167" cy="575.8" r="3.6" fill="#3a94e0" stroke="#e4eef6" stroke-width="1.8"/><circle cx="2174.6" cy="583.0" r="3.6" fill="#8a8a8a" stroke="#f0f0f0" stroke-width="1.8"/><circle cx="2181.9" cy="590.0999999999999" r="3.6" fill="#8a8a8a" stroke="#f0f0f0" stroke-width="1.8"/><path d="M2012.7 1402.8 L2036.7 1426.8" stroke="#2a7bc6" stroke-width="1.6"/><circle cx="2017.7" cy="1407.8" r="3.6" fill="#3a94e0" stroke="#e4eef6" stroke-width="1.8"/><circle cx="2025.3" cy="1415.0" r="3.6" fill="#8a8a8a" stroke="#f0f0f0" stroke-width="1.8"/><circle cx="2032.6000000000001" cy="1422.1" r="3.6" fill="#8a8a8a" stroke="#f0f0f0" stroke-width="1.8"/><path d="M2162.6 658.5 V683.4 H2187.4" fill="none" stroke="#a0a0a0" stroke-width="1.3"/><path d="M2163.4 682 C2176 681 2185.4 674 2186 658.8" fill="none" stroke="#f4f4f4" stroke-width="2.1"/><path d="M2157.2 717 V793.8 H2485.4" fill="none" stroke="#7c7c7c" stroke-width="1.1"/><path d="M2156.4 794.2 L2164.6 794.2 L2172.8 794.0 L2180.9 793.8 L2189.1 793.4 L2197.3 793.0 L2205.5 792.5 L2213.6 791.9 L2221.8 791.2 L2230.0 790.4 L2238.2 789.5 L2246.3 788.5 L2254.5 787.4 L2262.7 786.2 L2270.8 784.9 L2279.0 783.6 L2287.2 782.1 L2295.4 780.5 L2303.6 778.9 L2311.7 777.1 L2319.9 775.3 L2328.1 773.4 L2336.2 771.3 L2344.4 769.2 L2352.6 767.0 L2360.8 764.7 L2369.0 762.3 L2377.1 759.8 L2385.3 757.2 L2393.5 754.5 L2401.7 751.7 L2409.8 748.8 L2418.0 745.8 L2426.2 742.7 L2434.3 739.6 L2442.5 736.3 L2450.7 733.0 L2458.9 729.5 L2467.1 726.0 L2475.2 722.3 L2483.4 718.6" fill="none" stroke="#ffffff" stroke-width="5.6" stroke-linejoin="round"/><path d="M2164.8 1274.5 L2179.2 1269 L2187.8 1278.4 L2187.8 1290.5 L2172.2 1296.3 L2167.6 1286.6 Z" fill="none" stroke="#e0e0e0" stroke-width="1.7" stroke-linejoin="round"/><path d="M2164.8 1274.5 L2173 1284.2 L2187.8 1278.4 M2173 1284.2 L2172.2 1296.3" fill="none" stroke="#e0e0e0" stroke-width="1.7" stroke-linejoin="round"/><ellipse cx="2170.7" cy="1275.9" rx="1.7" ry="1.35" fill="#f4f4f4"/><ellipse cx="2178.1" cy="1273.7" rx="1.7" ry="1.35" fill="#f4f4f4"/><ellipse cx="2174.2" cy="1280.3" rx="1.7" ry="1.35" fill="#f4f4f4"/><ellipse cx="2181.6" cy="1278" rx="1.7" ry="1.35" fill="#f4f4f4"/><ellipse cx="2177.3" cy="1287.1" rx="1.7" ry="1.35" fill="#f4f4f4"/><ellipse cx="2182.7" cy="1289.1" rx="1.7" ry="1.35" fill="#f4f4f4"/><rect x="2371.6" y="1493.4" width="6.8" height="7.6" rx="2" fill="none" stroke="#8c8c8c" stroke-width="1.7"/><rect x="2371.6" y="1503.2" width="6.8" height="7.6" rx="2" fill="none" stroke="#8c8c8c" stroke-width="1.7"/><rect x="2371.6" y="1513" width="6.8" height="7.6" rx="2" fill="none" stroke="#8c8c8c" stroke-width="1.7"/><path d="M2375 1499.6 V1504.6 M2375 1509.4 V1514.4" stroke="#8c8c8c" stroke-width="1.8"/><rect x="2386.2" y="1507.2" width="12" height="10.8" rx="1" fill="#9a9a9a"/><path d="M2389 1502 V1501 A4.2 4.2 0 0 1 2397.2 1501 V1508" fill="none" stroke="#9a9a9a" stroke-width="2"/><g clip-path="url(#c1)"><circle cx="2140.1" cy="840.2" r="12.6" fill="#454545" stroke="#5f5f5f" stroke-width="2"/></g><g clip-path="url(#c2)"><circle cx="2499.7" cy="840.7" r="12.6" fill="#454545" stroke="#5f5f5f" stroke-width="2"/><circle cx="2499.7" cy="840.7" r="3.6" fill="#6a6a6a"/></g><g clip-path="url(#c3)"><circle cx="2140.1" cy="956.6" r="12.3" fill="#454545" stroke="#5f5f5f" stroke-width="2"/><circle cx="2140.1" cy="969.4" r="12.3" fill="#454545" stroke="#5f5f5f" stroke-width="2"/><circle cx="2140.1" cy="956.6" r="11.3" fill="#454545"/><circle cx="2140.1" cy="969.4" r="11.3" fill="#454545"/></g><g clip-path="url(#c4)"><circle cx="2499.3" cy="956.9" r="12.3" fill="#454545" stroke="#5f5f5f" stroke-width="2"/><circle cx="2499.3" cy="969.6999999999999" r="12.3" fill="#454545" stroke="#5f5f5f" stroke-width="2"/><circle cx="2499.3" cy="956.9" r="11.3" fill="#454545"/><circle cx="2499.3" cy="969.6999999999999" r="11.3" fill="#454545"/><circle cx="2499.3" cy="958.5" r="3.4" fill="#6a6a6a"/><circle cx="2499.3" cy="968.0999999999999" r="3.4" fill="#6a6a6a"/></g><g clip-path="url(#c5)"><circle cx="2511.3" cy="1042.3" r="12.6" fill="#3c3c3c" stroke="#555" stroke-width="2"/><circle cx="2511.3" cy="1042.3" r="3.6" fill="#666"/></g><g clip-path="url(#c6)"><circle cx="2522.8" cy="1149.1999999999998" r="12.3" fill="#333" stroke="#545454" stroke-width="2"/><circle cx="2522.8" cy="1162.0" r="12.3" fill="#333" stroke="#545454" stroke-width="2"/><circle cx="2522.8" cy="1149.1999999999998" r="11.3" fill="#333"/><circle cx="2522.8" cy="1162.0" r="11.3" fill="#333"/><circle cx="2522.8" cy="1150.8" r="3.4" fill="#555555"/><circle cx="2522.8" cy="1160.3999999999999" r="3.4" fill="#555555"/></g><g clip-path="url(#c7)"><circle cx="2522.8" cy="1346.9" r="12.6" fill="#333" stroke="#545454" stroke-width="2"/><circle cx="2522.8" cy="1346.9" r="3.6" fill="#555555"/></g><g clip-path="url(#c8)"><circle cx="2118.0" cy="1501.6" r="12.3" fill="#333" stroke="#545454" stroke-width="2"/><circle cx="2118.0" cy="1514.4" r="12.3" fill="#333" stroke="#545454" stroke-width="2"/><circle cx="2118.0" cy="1501.6" r="11.3" fill="#333"/><circle cx="2118.0" cy="1514.4" r="11.3" fill="#333"/></g><g clip-path="url(#c9)"><circle cx="2522.3" cy="1501.8999999999999" r="12.3" fill="#333" stroke="#545454" stroke-width="2"/><circle cx="2522.3" cy="1514.7" r="12.3" fill="#333" stroke="#545454" stroke-width="2"/><circle cx="2522.3" cy="1501.8999999999999" r="11.3" fill="#333"/><circle cx="2522.3" cy="1514.7" r="11.3" fill="#333"/><circle cx="2522.3" cy="1503.5" r="3.4" fill="#555555"/><circle cx="2522.3" cy="1513.1" r="3.4" fill="#555555"/></g><g clip-path="url(#c10)"><circle cx="2118.0" cy="1649" r="12.6" fill="#333" stroke="#545454" stroke-width="2"/></g><g clip-path="url(#c11)"><circle cx="2522.3" cy="1649" r="12.6" fill="#333" stroke="#545454" stroke-width="2"/><circle cx="2522.3" cy="1649" r="3.6" fill="#555555"/></g><g fill="none" stroke="#c9c9c9" stroke-width="0.9"><rect x="2031.5" y="223.4" width="5.5" height="5.5" transform="rotate(-7 2034.2 226.2)"/><rect x="2037.5" y="223.4" width="5.5" height="5.5" transform="rotate(8 2040.2 226.2)"/><rect x="2043.5" y="223.4" width="5.5" height="5.5" transform="rotate(-34 2046.3 226.2)"/><rect x="2031.5" y="229.5" width="5.5" height="5.5" transform="rotate(45 2034.2 232.2)"/><rect x="2037.5" y="229.5" width="5.5" height="5.5" transform="rotate(-10 2040.2 232.2)"/><rect x="2043.5" y="229.5" width="5.5" height="5.5" transform="rotate(-33 2046.3 232.2)"/><rect x="2031.5" y="235.5" width="5.5" height="5.5" transform="rotate(0 2034.2 238.2)"/><rect x="2037.5" y="235.5" width="5.5" height="5.5" transform="rotate(-43 2040.2 238.2)"/><rect x="2043.5" y="235.5" width="5.5" height="5.5" transform="rotate(43 2046.3 238.2)"/><rect x="2031.5" y="241.5" width="5.5" height="5.5" transform="rotate(-34 2034.2 244.3)"/><rect x="2037.5" y="241.5" width="5.5" height="5.5" transform="rotate(3 2040.2 244.3)"/><rect x="2043.5" y="241.5" width="5.5" height="5.5" transform="rotate(-8 2046.3 244.3)"/><rect x="2031.5" y="247.5" width="5.5" height="5.5" transform="rotate(38 2034.2 250.3)"/><rect x="2037.5" y="247.5" width="5.5" height="5.5" transform="rotate(-15 2040.2 250.3)"/><rect x="2043.5" y="247.5" width="5.5" height="5.5" transform="rotate(-5 2046.3 250.3)"/><rect x="2031.5" y="253.6" width="5.5" height="5.5" transform="rotate(35 2034.2 256.3)"/><rect x="2037.5" y="253.6" width="5.5" height="5.5" transform="rotate(12 2040.2 256.3)"/><rect x="2043.5" y="253.6" width="5.5" height="5.5" transform="rotate(41 2046.3 256.3)"/><rect x="2031.5" y="259.6" width="5.5" height="5.5" transform="rotate(-36 2034.2 262.3)"/><rect x="2037.5" y="259.6" width="5.5" height="5.5" transform="rotate(13 2040.2 262.3)"/><rect x="2043.5" y="259.6" width="5.5" height="5.5" transform="rotate(25 2046.3 262.3)"/><rect x="2031.5" y="265.6" width="5.5" height="5.5" transform="rotate(0 2034.2 268.3)"/><rect x="2037.5" y="265.6" width="5.5" height="5.5" transform="rotate(26 2040.2 268.3)"/><rect x="2043.5" y="265.6" width="5.5" height="5.5" transform="rotate(-39 2046.3 268.3)"/><rect x="2031.5" y="271.6" width="5.5" height="5.5" transform="rotate(-21 2034.2 274.4)"/><rect x="2037.5" y="271.6" width="5.5" height="5.5" transform="rotate(18 2040.2 274.4)"/><rect x="2043.5" y="271.6" width="5.5" height="5.5" transform="rotate(-18 2046.3 274.4)"/><rect x="2031.5" y="277.6" width="5.5" height="5.5" transform="rotate(7 2034.2 280.4)"/><rect x="2037.5" y="277.6" width="5.5" height="5.5" transform="rotate(-21 2040.2 280.4)"/><rect x="2043.5" y="277.6" width="5.5" height="5.5" transform="rotate(17 2046.3 280.4)"/><rect x="2031.5" y="283.6" width="5.5" height="5.5" transform="rotate(24 2034.2 286.4)"/><rect x="2037.5" y="283.6" width="5.5" height="5.5" transform="rotate(16 2040.2 286.4)"/><rect x="2043.5" y="283.6" width="5.5" height="5.5" transform="rotate(-9 2046.3 286.4)"/><rect x="2031.5" y="289.7" width="5.5" height="5.5" transform="rotate(-34 2034.2 292.4)"/><rect x="2037.5" y="289.7" width="5.5" height="5.5" transform="rotate(27 2040.2 292.4)"/><rect x="2043.5" y="289.7" width="5.5" height="5.5" transform="rotate(14 2046.3 292.4)"/><rect x="2031.5" y="295.7" width="5.5" height="5.5" transform="rotate(-16 2034.2 298.4)"/><rect x="2037.5" y="295.7" width="5.5" height="5.5" transform="rotate(-41 2040.2 298.4)"/><rect x="2043.5" y="295.7" width="5.5" height="5.5" transform="rotate(-16 2046.3 298.4)"/><rect x="2031.5" y="301.7" width="5.5" height="5.5" transform="rotate(37 2034.2 304.5)"/><rect x="2037.5" y="301.7" width="5.5" height="5.5" transform="rotate(4 2040.2 304.5)"/><rect x="2043.5" y="301.7" width="5.5" height="5.5" transform="rotate(-36 2046.3 304.5)"/><rect x="2031.5" y="307.7" width="5.5" height="5.5" transform="rotate(-17 2034.2 310.5)"/><rect x="2037.5" y="307.7" width="5.5" height="5.5" transform="rotate(22 2040.2 310.5)"/><rect x="2043.5" y="307.7" width="5.5" height="5.5" transform="rotate(22 2046.3 310.5)"/><rect x="2031.5" y="313.8" width="5.5" height="5.5" transform="rotate(-16 2034.2 316.5)"/><rect x="2037.5" y="313.8" width="5.5" height="5.5" transform="rotate(45 2040.2 316.5)"/><rect x="2043.5" y="313.8" width="5.5" height="5.5" transform="rotate(27 2046.3 316.5)"/><rect x="2031.5" y="319.8" width="5.5" height="5.5" transform="rotate(-43 2034.2 322.5)"/><rect x="2037.5" y="319.8" width="5.5" height="5.5" transform="rotate(-11 2040.2 322.5)"/><rect x="2043.5" y="319.8" width="5.5" height="5.5" transform="rotate(17 2046.3 322.5)"/><rect x="2031.5" y="325.8" width="5.5" height="5.5" transform="rotate(5 2034.2 328.5)"/><rect x="2037.5" y="325.8" width="5.5" height="5.5" transform="rotate(34 2040.2 328.5)"/><rect x="2043.5" y="325.8" width="5.5" height="5.5" transform="rotate(22 2046.3 328.5)"/><rect x="2031.5" y="331.8" width="5.5" height="5.5" transform="rotate(-5 2034.2 334.6)"/><rect x="2037.5" y="331.8" width="5.5" height="5.5" transform="rotate(26 2040.2 334.6)"/><rect x="2043.5" y="331.8" width="5.5" height="5.5" transform="rotate(-10 2046.3 334.6)"/></g><g fill="none" stroke="#cdcdcd" stroke-width="0.7"><rect x="1983.3" y="1479.8" width="3.3" height="3.3"/><rect x="1987.0" y="1479.8" width="3.3" height="3.3"/><rect x="1990.7" y="1479.8" width="3.3" height="3.3"/><rect x="1983.3" y="1483.5" width="3.3" height="3.3"/><rect x="1987.0" y="1483.5" width="3.3" height="3.3"/><rect x="1990.7" y="1483.5" width="3.3" height="3.3"/><rect x="1983.3" y="1487.2" width="3.3" height="3.3"/><rect x="1987.0" y="1487.2" width="3.3" height="3.3"/><rect x="1990.7" y="1487.2" width="3.3" height="3.3"/><rect x="1983.3" y="1490.9" width="3.3" height="3.3"/><rect x="1987.0" y="1490.9" width="3.3" height="3.3"/><rect x="1990.7" y="1490.9" width="3.3" height="3.3"/><rect x="1983.3" y="1494.6" width="3.3" height="3.3"/><rect x="1987.0" y="1494.6" width="3.3" height="3.3"/><rect x="1990.7" y="1494.6" width="3.3" height="3.3"/><rect x="1983.3" y="1498.3" width="3.3" height="3.3"/><rect x="1987.0" y="1498.3" width="3.3" height="3.3"/><rect x="1990.7" y="1498.3" width="3.3" height="3.3"/><rect x="1983.3" y="1502.1" width="3.3" height="3.3"/><rect x="1987.0" y="1502.1" width="3.3" height="3.3"/><rect x="1990.7" y="1502.1" width="3.3" height="3.3"/><rect x="1983.3" y="1505.8" width="3.3" height="3.3"/><rect x="1987.0" y="1505.8" width="3.3" height="3.3"/><rect x="1990.7" y="1505.8" width="3.3" height="3.3"/><rect x="1983.3" y="1509.5" width="3.3" height="3.3"/><rect x="1987.0" y="1509.5" width="3.3" height="3.3"/><rect x="1990.7" y="1509.5" width="3.3" height="3.3"/><rect x="1983.3" y="1513.2" width="3.3" height="3.3"/><rect x="1987.0" y="1513.2" width="3.3" height="3.3"/><rect x="1990.7" y="1513.2" width="3.3" height="3.3"/><rect x="1983.3" y="1517.0" width="3.3" height="3.3"/><rect x="1987.0" y="1517.0" width="3.3" height="3.3"/><rect x="1990.7" y="1517.0" width="3.3" height="3.3"/><rect x="1983.3" y="1520.7" width="3.3" height="3.3"/><rect x="1987.0" y="1520.7" width="3.3" height="3.3"/><rect x="1990.7" y="1520.7" width="3.3" height="3.3"/><rect x="1983.3" y="1524.4" width="3.3" height="3.3"/><rect x="1987.0" y="1524.4" width="3.3" height="3.3"/><rect x="1990.7" y="1524.4" width="3.3" height="3.3"/><rect x="1983.3" y="1528.1" width="3.3" height="3.3"/><rect x="1987.0" y="1528.1" width="3.3" height="3.3"/><rect x="1990.7" y="1528.1" width="3.3" height="3.3"/><rect x="1983.3" y="1531.8" width="3.3" height="3.3"/><rect x="1987.0" y="1531.8" width="3.3" height="3.3"/><rect x="1990.7" y="1531.8" width="3.3" height="3.3"/><rect x="1983.3" y="1535.5" width="3.3" height="3.3"/><rect x="1987.0" y="1535.5" width="3.3" height="3.3"/><rect x="1990.7" y="1535.5" width="3.3" height="3.3"/><rect x="1983.3" y="1539.3" width="3.3" height="3.3"/><rect x="1987.0" y="1539.3" width="3.3" height="3.3"/><rect x="1990.7" y="1539.3" width="3.3" height="3.3"/><rect x="1983.3" y="1543.0" width="3.3" height="3.3"/><rect x="1987.0" y="1543.0" width="3.3" height="3.3"/><rect x="1990.7" y="1543.0" width="3.3" height="3.3"/><rect x="1983.3" y="1546.7" width="3.3" height="3.3"/><rect x="1987.0" y="1546.7" width="3.3" height="3.3"/><rect x="1990.7" y="1546.7" width="3.3" height="3.3"/><rect x="1998.1" y="1479.8" width="3.3" height="3.3"/><rect x="2001.8" y="1479.8" width="3.3" height="3.3"/><rect x="2005.4" y="1479.8" width="3.3" height="3.3"/><rect x="1998.1" y="1483.5" width="3.3" height="3.3"/><rect x="2001.8" y="1483.5" width="3.3" height="3.3"/><rect x="2005.4" y="1483.5" width="3.3" height="3.3"/><rect x="1998.1" y="1487.2" width="3.3" height="3.3"/><rect x="2001.8" y="1487.2" width="3.3" height="3.3"/><rect x="2005.4" y="1487.2" width="3.3" height="3.3"/><rect x="1998.1" y="1490.9" width="3.3" height="3.3"/><rect x="2001.8" y="1490.9" width="3.3" height="3.3"/><rect x="2005.4" y="1490.9" width="3.3" height="3.3"/><rect x="1998.1" y="1494.6" width="3.3" height="3.3"/><rect x="2001.8" y="1494.6" width="3.3" height="3.3"/><rect x="2005.4" y="1494.6" width="3.3" height="3.3"/><rect x="1998.1" y="1498.3" width="3.3" height="3.3"/><rect x="2001.8" y="1498.3" width="3.3" height="3.3"/><rect x="2005.4" y="1498.3" width="3.3" height="3.3"/><rect x="1998.1" y="1502.1" width="3.3" height="3.3"/><rect x="2001.8" y="1502.1" width="3.3" height="3.3"/><rect x="2005.4" y="1502.1" width="3.3" height="3.3"/><rect x="1998.1" y="1505.8" width="3.3" height="3.3"/><rect x="2001.8" y="1505.8" width="3.3" height="3.3"/><rect x="2005.4" y="1505.8" width="3.3" height="3.3"/><rect x="1998.1" y="1509.5" width="3.3" height="3.3"/><rect x="2001.8" y="1509.5" width="3.3" height="3.3"/><rect x="2005.4" y="1509.5" width="3.3" height="3.3"/><rect x="1998.1" y="1513.2" width="3.3" height="3.3"/><rect x="2001.8" y="1513.2" width="3.3" height="3.3"/><rect x="2005.4" y="1513.2" width="3.3" height="3.3"/><rect x="1998.1" y="1517.0" width="3.3" height="3.3"/><rect x="2001.8" y="1517.0" width="3.3" height="3.3"/><rect x="2005.4" y="1517.0" width="3.3" height="3.3"/><rect x="1998.1" y="1520.7" width="3.3" height="3.3"/><rect x="2001.8" y="1520.7" width="3.3" height="3.3"/><rect x="2005.4" y="1520.7" width="3.3" height="3.3"/><rect x="1998.1" y="1524.4" width="3.3" height="3.3"/><rect x="2001.8" y="1524.4" width="3.3" height="3.3"/><rect x="2005.4" y="1524.4" width="3.3" height="3.3"/><rect x="1998.1" y="1528.1" width="3.3" height="3.3"/><rect x="2001.8" y="1528.1" width="3.3" height="3.3"/><rect x="2005.4" y="1528.1" width="3.3" height="3.3"/><rect x="1998.1" y="1531.8" width="3.3" height="3.3"/><rect x="2001.8" y="1531.8" width="3.3" height="3.3"/><rect x="2005.4" y="1531.8" width="3.3" height="3.3"/><rect x="1998.1" y="1535.5" width="3.3" height="3.3"/><rect x="2001.8" y="1535.5" width="3.3" height="3.3"/><rect x="2005.4" y="1535.5" width="3.3" height="3.3"/><rect x="1998.1" y="1539.3" width="3.3" height="3.3"/><rect x="2001.8" y="1539.3" width="3.3" height="3.3"/><rect x="2005.4" y="1539.3" width="3.3" height="3.3"/><rect x="1998.1" y="1543.0" width="3.3" height="3.3"/><rect x="2001.8" y="1543.0" width="3.3" height="3.3"/><rect x="2005.4" y="1543.0" width="3.3" height="3.3"/><rect x="1998.1" y="1546.7" width="3.3" height="3.3"/><rect x="2001.8" y="1546.7" width="3.3" height="3.3"/><rect x="2005.4" y="1546.7" width="3.3" height="3.3"/><rect x="2012.8" y="1479.8" width="3.3" height="3.3" transform="rotate(7 2014.4 1481.4)"/><rect x="2016.5" y="1479.8" width="3.3" height="3.3" transform="rotate(-3 2018.1 1481.4)"/><rect x="2020.1" y="1479.8" width="3.3" height="3.3" transform="rotate(6 2021.8 1481.4)"/><rect x="2012.8" y="1483.5" width="3.3" height="3.3" transform="rotate(6 2014.4 1485.1)"/><rect x="2016.5" y="1483.5" width="3.3" height="3.3" transform="rotate(-7 2018.1 1485.1)"/><rect x="2020.1" y="1483.5" width="3.3" height="3.3" transform="rotate(6 2021.8 1485.1)"/><rect x="2012.8" y="1487.2" width="3.3" height="3.3" transform="rotate(-2 2014.4 1488.8)"/><rect x="2016.5" y="1487.2" width="3.3" height="3.3" transform="rotate(5 2018.1 1488.8)"/><rect x="2020.1" y="1487.2" width="3.3" height="3.3" transform="rotate(0 2021.8 1488.8)"/><rect x="2012.8" y="1490.9" width="3.3" height="3.3" transform="rotate(-2 2014.4 1492.6)"/><rect x="2016.5" y="1490.9" width="3.3" height="3.3" transform="rotate(1 2018.1 1492.6)"/><rect x="2020.1" y="1490.9" width="3.3" height="3.3" transform="rotate(6 2021.8 1492.6)"/><rect x="2012.8" y="1494.6" width="3.3" height="3.3" transform="rotate(-4 2014.4 1496.3)"/><rect x="2016.5" y="1494.6" width="3.3" height="3.3" transform="rotate(-1 2018.1 1496.3)"/><rect x="2020.1" y="1494.6" width="3.3" height="3.3" transform="rotate(5 2021.8 1496.3)"/><rect x="2012.8" y="1498.3" width="3.3" height="3.3" transform="rotate(4 2014.4 1500.0)"/><rect x="2016.5" y="1498.3" width="3.3" height="3.3" transform="rotate(4 2018.1 1500.0)"/><rect x="2020.1" y="1498.3" width="3.3" height="3.3" transform="rotate(-2 2021.8 1500.0)"/><rect x="2012.8" y="1502.1" width="3.3" height="3.3" transform="rotate(5 2014.4 1503.7)"/><rect x="2016.5" y="1502.1" width="3.3" height="3.3" transform="rotate(-1 2018.1 1503.7)"/><rect x="2020.1" y="1502.1" width="3.3" height="3.3" transform="rotate(-4 2021.8 1503.7)"/><rect x="2012.8" y="1505.8" width="3.3" height="3.3" transform="rotate(-2 2014.4 1507.4)"/><rect x="2016.5" y="1505.8" width="3.3" height="3.3" transform="rotate(-2 2018.1 1507.4)"/><rect x="2020.1" y="1505.8" width="3.3" height="3.3" transform="rotate(0 2021.8 1507.4)"/><rect x="2012.8" y="1509.5" width="3.3" height="3.3" transform="rotate(7 2014.4 1511.2)"/><rect x="2016.5" y="1509.5" width="3.3" height="3.3" transform="rotate(6 2018.1 1511.2)"/><rect x="2020.1" y="1509.5" width="3.3" height="3.3" transform="rotate(4 2021.8 1511.2)"/><rect x="2012.8" y="1513.2" width="3.3" height="3.3" transform="rotate(2 2014.4 1514.9)"/><rect x="2016.5" y="1513.2" width="3.3" height="3.3" transform="rotate(7 2018.1 1514.9)"/><rect x="2020.1" y="1513.2" width="3.3" height="3.3" transform="rotate(1 2021.8 1514.9)"/><rect x="2012.8" y="1517.0" width="3.3" height="3.3" transform="rotate(5 2014.4 1518.6)"/><rect x="2016.5" y="1517.0" width="3.3" height="3.3" transform="rotate(-2 2018.1 1518.6)"/><rect x="2020.1" y="1517.0" width="3.3" height="3.3" transform="rotate(-7 2021.8 1518.6)"/><rect x="2012.8" y="1520.7" width="3.3" height="3.3" transform="rotate(-3 2014.4 1522.3)"/><rect x="2016.5" y="1520.7" width="3.3" height="3.3" transform="rotate(6 2018.1 1522.3)"/><rect x="2020.1" y="1520.7" width="3.3" height="3.3" transform="rotate(-1 2021.8 1522.3)"/><rect x="2012.8" y="1524.4" width="3.3" height="3.3" transform="rotate(0 2014.4 1526.0)"/><rect x="2016.5" y="1524.4" width="3.3" height="3.3" transform="rotate(6 2018.1 1526.0)"/><rect x="2020.1" y="1524.4" width="3.3" height="3.3" transform="rotate(-4 2021.8 1526.0)"/><rect x="2012.8" y="1528.1" width="3.3" height="3.3" transform="rotate(0 2014.4 1529.8)"/><rect x="2016.5" y="1528.1" width="3.3" height="3.3" transform="rotate(-5 2018.1 1529.8)"/><rect x="2020.1" y="1528.1" width="3.3" height="3.3" transform="rotate(-4 2021.8 1529.8)"/><rect x="2012.8" y="1531.8" width="3.3" height="3.3" transform="rotate(0 2014.4 1533.5)"/><rect x="2016.5" y="1531.8" width="3.3" height="3.3" transform="rotate(0 2018.1 1533.5)"/><rect x="2020.1" y="1531.8" width="3.3" height="3.3" transform="rotate(-3 2021.8 1533.5)"/><rect x="2012.8" y="1535.5" width="3.3" height="3.3" transform="rotate(-5 2014.4 1537.2)"/><rect x="2016.5" y="1535.5" width="3.3" height="3.3" transform="rotate(7 2018.1 1537.2)"/><rect x="2020.1" y="1535.5" width="3.3" height="3.3" transform="rotate(0 2021.8 1537.2)"/><rect x="2012.8" y="1539.3" width="3.3" height="3.3" transform="rotate(3 2014.4 1540.9)"/><rect x="2016.5" y="1539.3" width="3.3" height="3.3" transform="rotate(3 2018.1 1540.9)"/><rect x="2020.1" y="1539.3" width="3.3" height="3.3" transform="rotate(0 2021.8 1540.9)"/><rect x="2012.8" y="1543.0" width="3.3" height="3.3" transform="rotate(-3 2014.4 1544.6)"/><rect x="2016.5" y="1543.0" width="3.3" height="3.3" transform="rotate(5 2018.1 1544.6)"/><rect x="2020.1" y="1543.0" width="3.3" height="3.3" transform="rotate(-3 2021.8 1544.6)"/><rect x="2012.8" y="1546.7" width="3.3" height="3.3" transform="rotate(-7 2014.4 1548.4)"/><rect x="2016.5" y="1546.7" width="3.3" height="3.3" transform="rotate(0 2018.1 1548.4)"/><rect x="2020.1" y="1546.7" width="3.3" height="3.3" transform="rotate(7 2021.8 1548.4)"/><rect x="2027.5" y="1479.8" width="3.3" height="3.3" transform="rotate(7 2029.2 1481.4)"/><rect x="2031.2" y="1479.8" width="3.3" height="3.3" transform="rotate(-3 2032.8 1481.4)"/><rect x="2034.9" y="1479.8" width="3.3" height="3.3" transform="rotate(-15 2036.5 1481.4)"/><rect x="2027.5" y="1483.5" width="3.3" height="3.3" transform="rotate(11 2029.2 1485.1)"/><rect x="2031.2" y="1483.5" width="3.3" height="3.3" transform="rotate(-14 2032.8 1485.1)"/><rect x="2034.9" y="1483.5" width="3.3" height="3.3" transform="rotate(-15 2036.5 1485.1)"/><rect x="2027.5" y="1487.2" width="3.3" height="3.3" transform="rotate(-14 2029.2 1488.8)"/><rect x="2031.2" y="1487.2" width="3.3" height="3.3" transform="rotate(-1 2032.8 1488.8)"/><rect x="2034.9" y="1487.2" width="3.3" height="3.3" transform="rotate(-3 2036.5 1488.8)"/><rect x="2027.5" y="1490.9" width="3.3" height="3.3" transform="rotate(13 2029.2 1492.6)"/><rect x="2031.2" y="1490.9" width="3.3" height="3.3" transform="rotate(-14 2032.8 1492.6)"/><rect x="2034.9" y="1490.9" width="3.3" height="3.3" transform="rotate(11 2036.5 1492.6)"/><rect x="2027.5" y="1494.6" width="3.3" height="3.3" transform="rotate(12 2029.2 1496.3)"/><rect x="2031.2" y="1494.6" width="3.3" height="3.3" transform="rotate(3 2032.8 1496.3)"/><rect x="2034.9" y="1494.6" width="3.3" height="3.3" transform="rotate(-10 2036.5 1496.3)"/><rect x="2027.5" y="1498.3" width="3.3" height="3.3" transform="rotate(5 2029.2 1500.0)"/><rect x="2031.2" y="1498.3" width="3.3" height="3.3" transform="rotate(-14 2032.8 1500.0)"/><rect x="2034.9" y="1498.3" width="3.3" height="3.3" transform="rotate(5 2036.5 1500.0)"/><rect x="2027.5" y="1502.1" width="3.3" height="3.3" transform="rotate(7 2029.2 1503.7)"/><rect x="2031.2" y="1502.1" width="3.3" height="3.3" transform="rotate(4 2032.8 1503.7)"/><rect x="2034.9" y="1502.1" width="3.3" height="3.3" transform="rotate(-7 2036.5 1503.7)"/><rect x="2027.5" y="1505.8" width="3.3" height="3.3" transform="rotate(-9 2029.2 1507.4)"/><rect x="2031.2" y="1505.8" width="3.3" height="3.3" transform="rotate(15 2032.8 1507.4)"/><rect x="2034.9" y="1505.8" width="3.3" height="3.3" transform="rotate(-6 2036.5 1507.4)"/><rect x="2027.5" y="1509.5" width="3.3" height="3.3" transform="rotate(15 2029.2 1511.2)"/><rect x="2031.2" y="1509.5" width="3.3" height="3.3" transform="rotate(13 2032.8 1511.2)"/><rect x="2034.9" y="1509.5" width="3.3" height="3.3" transform="rotate(5 2036.5 1511.2)"/><rect x="2027.5" y="1513.2" width="3.3" height="3.3" transform="rotate(-7 2029.2 1514.9)"/><rect x="2031.2" y="1513.2" width="3.3" height="3.3" transform="rotate(6 2032.8 1514.9)"/><rect x="2034.9" y="1513.2" width="3.3" height="3.3" transform="rotate(12 2036.5 1514.9)"/><rect x="2027.5" y="1517.0" width="3.3" height="3.3" transform="rotate(0 2029.2 1518.6)"/><rect x="2031.2" y="1517.0" width="3.3" height="3.3" transform="rotate(-16 2032.8 1518.6)"/><rect x="2034.9" y="1517.0" width="3.3" height="3.3" transform="rotate(0 2036.5 1518.6)"/><rect x="2027.5" y="1520.7" width="3.3" height="3.3" transform="rotate(8 2029.2 1522.3)"/><rect x="2031.2" y="1520.7" width="3.3" height="3.3" transform="rotate(7 2032.8 1522.3)"/><rect x="2034.9" y="1520.7" width="3.3" height="3.3" transform="rotate(-10 2036.5 1522.3)"/><rect x="2027.5" y="1524.4" width="3.3" height="3.3" transform="rotate(2 2029.2 1526.0)"/><rect x="2031.2" y="1524.4" width="3.3" height="3.3" transform="rotate(7 2032.8 1526.0)"/><rect x="2034.9" y="1524.4" width="3.3" height="3.3" transform="rotate(-7 2036.5 1526.0)"/><rect x="2027.5" y="1528.1" width="3.3" height="3.3" transform="rotate(-15 2029.2 1529.8)"/><rect x="2031.2" y="1528.1" width="3.3" height="3.3" transform="rotate(-6 2032.8 1529.8)"/><rect x="2034.9" y="1528.1" width="3.3" height="3.3" transform="rotate(-4 2036.5 1529.8)"/><rect x="2027.5" y="1531.8" width="3.3" height="3.3" transform="rotate(-3 2029.2 1533.5)"/><rect x="2031.2" y="1531.8" width="3.3" height="3.3" transform="rotate(7 2032.8 1533.5)"/><rect x="2034.9" y="1531.8" width="3.3" height="3.3" transform="rotate(5 2036.5 1533.5)"/><rect x="2027.5" y="1535.5" width="3.3" height="3.3" transform="rotate(1 2029.2 1537.2)"/><rect x="2031.2" y="1535.5" width="3.3" height="3.3" transform="rotate(-3 2032.8 1537.2)"/><rect x="2034.9" y="1535.5" width="3.3" height="3.3" transform="rotate(-10 2036.5 1537.2)"/><rect x="2027.5" y="1539.3" width="3.3" height="3.3" transform="rotate(-3 2029.2 1540.9)"/><rect x="2031.2" y="1539.3" width="3.3" height="3.3" transform="rotate(2 2032.8 1540.9)"/><rect x="2034.9" y="1539.3" width="3.3" height="3.3" transform="rotate(-15 2036.5 1540.9)"/><rect x="2027.5" y="1543.0" width="3.3" height="3.3" transform="rotate(7 2029.2 1544.6)"/><rect x="2031.2" y="1543.0" width="3.3" height="3.3" transform="rotate(15 2032.8 1544.6)"/><rect x="2034.9" y="1543.0" width="3.3" height="3.3" transform="rotate(10 2036.5 1544.6)"/><rect x="2027.5" y="1546.7" width="3.3" height="3.3" transform="rotate(1 2029.2 1548.4)"/><rect x="2031.2" y="1546.7" width="3.3" height="3.3" transform="rotate(-6 2032.8 1548.4)"/><rect x="2034.9" y="1546.7" width="3.3" height="3.3" transform="rotate(-9 2036.5 1548.4)"/><rect x="2042.2" y="1479.8" width="3.3" height="3.3" transform="rotate(16 2043.9 1481.4)"/><rect x="2045.9" y="1479.8" width="3.3" height="3.3" transform="rotate(-24 2047.6 1481.4)"/><rect x="2049.6" y="1479.8" width="3.3" height="3.3" transform="rotate(-13 2051.2 1481.4)"/><rect x="2042.2" y="1483.5" width="3.3" height="3.3" transform="rotate(17 2043.9 1485.1)"/><rect x="2045.9" y="1483.5" width="3.3" height="3.3" transform="rotate(12 2047.6 1485.1)"/><rect x="2049.6" y="1483.5" width="3.3" height="3.3" transform="rotate(22 2051.2 1485.1)"/><rect x="2042.2" y="1487.2" width="3.3" height="3.3" transform="rotate(9 2043.9 1488.8)"/><rect x="2045.9" y="1487.2" width="3.3" height="3.3" transform="rotate(-23 2047.6 1488.8)"/><rect x="2049.6" y="1487.2" width="3.3" height="3.3" transform="rotate(18 2051.2 1488.8)"/><rect x="2042.2" y="1490.9" width="3.3" height="3.3" transform="rotate(-5 2043.9 1492.6)"/><rect x="2045.9" y="1490.9" width="3.3" height="3.3" transform="rotate(4 2047.6 1492.6)"/><rect x="2049.6" y="1490.9" width="3.3" height="3.3" transform="rotate(5 2051.2 1492.6)"/><rect x="2042.2" y="1494.6" width="3.3" height="3.3" transform="rotate(16 2043.9 1496.3)"/><rect x="2045.9" y="1494.6" width="3.3" height="3.3" transform="rotate(-11 2047.6 1496.3)"/><rect x="2049.6" y="1494.6" width="3.3" height="3.3" transform="rotate(12 2051.2 1496.3)"/><rect x="2042.2" y="1498.3" width="3.3" height="3.3" transform="rotate(-16 2043.9 1500.0)"/><rect x="2045.9" y="1498.3" width="3.3" height="3.3" transform="rotate(-22 2047.6 1500.0)"/><rect x="2049.6" y="1498.3" width="3.3" height="3.3" transform="rotate(10 2051.2 1500.0)"/><rect x="2042.2" y="1502.1" width="3.3" height="3.3" transform="rotate(14 2043.9 1503.7)"/><rect x="2045.9" y="1502.1" width="3.3" height="3.3" transform="rotate(-9 2047.6 1503.7)"/><rect x="2049.6" y="1502.1" width="3.3" height="3.3" transform="rotate(-18 2051.2 1503.7)"/><rect x="2042.2" y="1505.8" width="3.3" height="3.3" transform="rotate(-27 2043.9 1507.4)"/><rect x="2045.9" y="1505.8" width="3.3" height="3.3" transform="rotate(19 2047.6 1507.4)"/><rect x="2049.6" y="1505.8" width="3.3" height="3.3" transform="rotate(27 2051.2 1507.4)"/><rect x="2042.2" y="1509.5" width="3.3" height="3.3" transform="rotate(-6 2043.9 1511.2)"/><rect x="2045.9" y="1509.5" width="3.3" height="3.3" transform="rotate(22 2047.6 1511.2)"/><rect x="2049.6" y="1509.5" width="3.3" height="3.3" transform="rotate(25 2051.2 1511.2)"/><rect x="2042.2" y="1513.2" width="3.3" height="3.3" transform="rotate(3 2043.9 1514.9)"/><rect x="2045.9" y="1513.2" width="3.3" height="3.3" transform="rotate(10 2047.6 1514.9)"/><rect x="2049.6" y="1513.2" width="3.3" height="3.3" transform="rotate(0 2051.2 1514.9)"/><rect x="2042.2" y="1517.0" width="3.3" height="3.3" transform="rotate(7 2043.9 1518.6)"/><rect x="2045.9" y="1517.0" width="3.3" height="3.3" transform="rotate(-22 2047.6 1518.6)"/><rect x="2049.6" y="1517.0" width="3.3" height="3.3" transform="rotate(0 2051.2 1518.6)"/><rect x="2042.2" y="1520.7" width="3.3" height="3.3" transform="rotate(24 2043.9 1522.3)"/><rect x="2045.9" y="1520.7" width="3.3" height="3.3" transform="rotate(-23 2047.6 1522.3)"/><rect x="2049.6" y="1520.7" width="3.3" height="3.3" transform="rotate(15 2051.2 1522.3)"/><rect x="2042.2" y="1524.4" width="3.3" height="3.3" transform="rotate(-4 2043.9 1526.0)"/><rect x="2045.9" y="1524.4" width="3.3" height="3.3" transform="rotate(17 2047.6 1526.0)"/><rect x="2049.6" y="1524.4" width="3.3" height="3.3" transform="rotate(-24 2051.2 1526.0)"/><rect x="2042.2" y="1528.1" width="3.3" height="3.3" transform="rotate(13 2043.9 1529.8)"/><rect x="2045.9" y="1528.1" width="3.3" height="3.3" transform="rotate(10 2047.6 1529.8)"/><rect x="2049.6" y="1528.1" width="3.3" height="3.3" transform="rotate(-14 2051.2 1529.8)"/><rect x="2042.2" y="1531.8" width="3.3" height="3.3" transform="rotate(2 2043.9 1533.5)"/><rect x="2045.9" y="1531.8" width="3.3" height="3.3" transform="rotate(13 2047.6 1533.5)"/><rect x="2049.6" y="1531.8" width="3.3" height="3.3" transform="rotate(3 2051.2 1533.5)"/><rect x="2042.2" y="1535.5" width="3.3" height="3.3" transform="rotate(10 2043.9 1537.2)"/><rect x="2045.9" y="1535.5" width="3.3" height="3.3" transform="rotate(-25 2047.6 1537.2)"/><rect x="2049.6" y="1535.5" width="3.3" height="3.3" transform="rotate(-9 2051.2 1537.2)"/><rect x="2042.2" y="1539.3" width="3.3" height="3.3" transform="rotate(-14 2043.9 1540.9)"/><rect x="2045.9" y="1539.3" width="3.3" height="3.3" transform="rotate(-7 2047.6 1540.9)"/><rect x="2049.6" y="1539.3" width="3.3" height="3.3" transform="rotate(13 2051.2 1540.9)"/><rect x="2042.2" y="1543.0" width="3.3" height="3.3" transform="rotate(-14 2043.9 1544.6)"/><rect x="2045.9" y="1543.0" width="3.3" height="3.3" transform="rotate(-21 2047.6 1544.6)"/><rect x="2049.6" y="1543.0" width="3.3" height="3.3" transform="rotate(-14 2051.2 1544.6)"/><rect x="2042.2" y="1546.7" width="3.3" height="3.3" transform="rotate(0 2043.9 1548.4)"/><rect x="2045.9" y="1546.7" width="3.3" height="3.3" transform="rotate(-22 2047.6 1548.4)"/><rect x="2049.6" y="1546.7" width="3.3" height="3.3" transform="rotate(-26 2051.2 1548.4)"/><rect x="2056.9" y="1479.8" width="3.3" height="3.3" transform="rotate(13 2058.6 1481.4)"/><rect x="2060.6" y="1479.8" width="3.3" height="3.3" transform="rotate(-7 2062.3 1481.4)"/><rect x="2064.3" y="1479.8" width="3.3" height="3.3" transform="rotate(33 2066.0 1481.4)"/><rect x="2056.9" y="1483.5" width="3.3" height="3.3" transform="rotate(-34 2058.6 1485.1)"/><rect x="2060.6" y="1483.5" width="3.3" height="3.3" transform="rotate(-14 2062.3 1485.1)"/><rect x="2064.3" y="1483.5" width="3.3" height="3.3" transform="rotate(0 2066.0 1485.1)"/><rect x="2056.9" y="1487.2" width="3.3" height="3.3" transform="rotate(-23 2058.6 1488.8)"/><rect x="2060.6" y="1487.2" width="3.3" height="3.3" transform="rotate(45 2062.3 1488.8)"/><rect x="2064.3" y="1487.2" width="3.3" height="3.3" transform="rotate(18 2066.0 1488.8)"/><rect x="2056.9" y="1490.9" width="3.3" height="3.3" transform="rotate(-34 2058.6 1492.6)"/><rect x="2060.6" y="1490.9" width="3.3" height="3.3" transform="rotate(24 2062.3 1492.6)"/><rect x="2064.3" y="1490.9" width="3.3" height="3.3" transform="rotate(4 2066.0 1492.6)"/><rect x="2056.9" y="1494.6" width="3.3" height="3.3" transform="rotate(32 2058.6 1496.3)"/><rect x="2060.6" y="1494.6" width="3.3" height="3.3" transform="rotate(-18 2062.3 1496.3)"/><rect x="2064.3" y="1494.6" width="3.3" height="3.3" transform="rotate(-32 2066.0 1496.3)"/><rect x="2056.9" y="1498.3" width="3.3" height="3.3" transform="rotate(43 2058.6 1500.0)"/><rect x="2060.6" y="1498.3" width="3.3" height="3.3" transform="rotate(38 2062.3 1500.0)"/><rect x="2064.3" y="1498.3" width="3.3" height="3.3" transform="rotate(21 2066.0 1500.0)"/><rect x="2056.9" y="1502.1" width="3.3" height="3.3" transform="rotate(42 2058.6 1503.7)"/><rect x="2060.6" y="1502.1" width="3.3" height="3.3" transform="rotate(-26 2062.3 1503.7)"/><rect x="2064.3" y="1502.1" width="3.3" height="3.3" transform="rotate(26 2066.0 1503.7)"/><rect x="2056.9" y="1505.8" width="3.3" height="3.3" transform="rotate(41 2058.6 1507.4)"/><rect x="2060.6" y="1505.8" width="3.3" height="3.3" transform="rotate(-20 2062.3 1507.4)"/><rect x="2064.3" y="1505.8" width="3.3" height="3.3" transform="rotate(-24 2066.0 1507.4)"/><rect x="2056.9" y="1509.5" width="3.3" height="3.3" transform="rotate(0 2058.6 1511.2)"/><rect x="2060.6" y="1509.5" width="3.3" height="3.3" transform="rotate(15 2062.3 1511.2)"/><rect x="2064.3" y="1509.5" width="3.3" height="3.3" transform="rotate(21 2066.0 1511.2)"/><rect x="2056.9" y="1513.2" width="3.3" height="3.3" transform="rotate(44 2058.6 1514.9)"/><rect x="2060.6" y="1513.2" width="3.3" height="3.3" transform="rotate(35 2062.3 1514.9)"/><rect x="2064.3" y="1513.2" width="3.3" height="3.3" transform="rotate(-20 2066.0 1514.9)"/><rect x="2056.9" y="1517.0" width="3.3" height="3.3" transform="rotate(-7 2058.6 1518.6)"/><rect x="2060.6" y="1517.0" width="3.3" height="3.3" transform="rotate(31 2062.3 1518.6)"/><rect x="2064.3" y="1517.0" width="3.3" height="3.3" transform="rotate(13 2066.0 1518.6)"/><rect x="2056.9" y="1520.7" width="3.3" height="3.3" transform="rotate(43 2058.6 1522.3)"/><rect x="2060.6" y="1520.7" width="3.3" height="3.3" transform="rotate(-41 2062.3 1522.3)"/><rect x="2064.3" y="1520.7" width="3.3" height="3.3" transform="rotate(-19 2066.0 1522.3)"/><rect x="2056.9" y="1524.4" width="3.3" height="3.3" transform="rotate(40 2058.6 1526.0)"/><rect x="2060.6" y="1524.4" width="3.3" height="3.3" transform="rotate(-5 2062.3 1526.0)"/><rect x="2064.3" y="1524.4" width="3.3" height="3.3" transform="rotate(-2 2066.0 1526.0)"/><rect x="2056.9" y="1528.1" width="3.3" height="3.3" transform="rotate(23 2058.6 1529.8)"/><rect x="2060.6" y="1528.1" width="3.3" height="3.3" transform="rotate(-11 2062.3 1529.8)"/><rect x="2064.3" y="1528.1" width="3.3" height="3.3" transform="rotate(-23 2066.0 1529.8)"/><rect x="2056.9" y="1531.8" width="3.3" height="3.3" transform="rotate(6 2058.6 1533.5)"/><rect x="2060.6" y="1531.8" width="3.3" height="3.3" transform="rotate(-5 2062.3 1533.5)"/><rect x="2064.3" y="1531.8" width="3.3" height="3.3" transform="rotate(12 2066.0 1533.5)"/><rect x="2056.9" y="1535.5" width="3.3" height="3.3" transform="rotate(9 2058.6 1537.2)"/><rect x="2060.6" y="1535.5" width="3.3" height="3.3" transform="rotate(-9 2062.3 1537.2)"/><rect x="2064.3" y="1535.5" width="3.3" height="3.3" transform="rotate(-2 2066.0 1537.2)"/><rect x="2056.9" y="1539.3" width="3.3" height="3.3" transform="rotate(-4 2058.6 1540.9)"/><rect x="2060.6" y="1539.3" width="3.3" height="3.3" transform="rotate(-32 2062.3 1540.9)"/><rect x="2064.3" y="1539.3" width="3.3" height="3.3" transform="rotate(-19 2066.0 1540.9)"/><rect x="2056.9" y="1543.0" width="3.3" height="3.3" transform="rotate(34 2058.6 1544.6)"/><rect x="2060.6" y="1543.0" width="3.3" height="3.3" transform="rotate(-36 2062.3 1544.6)"/><rect x="2064.3" y="1543.0" width="3.3" height="3.3" transform="rotate(15 2066.0 1544.6)"/><rect x="2056.9" y="1546.7" width="3.3" height="3.3" transform="rotate(44 2058.6 1548.4)"/><rect x="2060.6" y="1546.7" width="3.3" height="3.3" transform="rotate(45 2062.3 1548.4)"/><rect x="2064.3" y="1546.7" width="3.3" height="3.3" transform="rotate(-41 2066.0 1548.4)"/><rect x="2071.7" y="1479.8" width="3.3" height="3.3" transform="rotate(-5 2073.3 1481.4)"/><rect x="2075.3" y="1479.8" width="3.3" height="3.3" transform="rotate(16 2077.0 1481.4)"/><rect x="2079.0" y="1479.8" width="3.3" height="3.3" transform="rotate(-38 2080.7 1481.4)"/><rect x="2071.7" y="1483.5" width="3.3" height="3.3" transform="rotate(24 2073.3 1485.1)"/><rect x="2075.3" y="1483.5" width="3.3" height="3.3" transform="rotate(-13 2077.0 1485.1)"/><rect x="2079.0" y="1483.5" width="3.3" height="3.3" transform="rotate(3 2080.7 1485.1)"/><rect x="2071.7" y="1487.2" width="3.3" height="3.3" transform="rotate(34 2073.3 1488.8)"/><rect x="2075.3" y="1487.2" width="3.3" height="3.3" transform="rotate(-43 2077.0 1488.8)"/><rect x="2079.0" y="1487.2" width="3.3" height="3.3" transform="rotate(15 2080.7 1488.8)"/><rect x="2071.7" y="1490.9" width="3.3" height="3.3" transform="rotate(-21 2073.3 1492.6)"/><rect x="2075.3" y="1490.9" width="3.3" height="3.3" transform="rotate(-30 2077.0 1492.6)"/><rect x="2079.0" y="1490.9" width="3.3" height="3.3" transform="rotate(-8 2080.7 1492.6)"/><rect x="2071.7" y="1494.6" width="3.3" height="3.3" transform="rotate(-29 2073.3 1496.3)"/><rect x="2075.3" y="1494.6" width="3.3" height="3.3" transform="rotate(23 2077.0 1496.3)"/><rect x="2079.0" y="1494.6" width="3.3" height="3.3" transform="rotate(13 2080.7 1496.3)"/><rect x="2071.7" y="1498.3" width="3.3" height="3.3" transform="rotate(23 2073.3 1500.0)"/><rect x="2075.3" y="1498.3" width="3.3" height="3.3" transform="rotate(23 2077.0 1500.0)"/><rect x="2079.0" y="1498.3" width="3.3" height="3.3" transform="rotate(-38 2080.7 1500.0)"/><rect x="2071.7" y="1502.1" width="3.3" height="3.3" transform="rotate(0 2073.3 1503.7)"/><rect x="2075.3" y="1502.1" width="3.3" height="3.3" transform="rotate(-37 2077.0 1503.7)"/><rect x="2079.0" y="1502.1" width="3.3" height="3.3" transform="rotate(24 2080.7 1503.7)"/><rect x="2071.7" y="1505.8" width="3.3" height="3.3" transform="rotate(8 2073.3 1507.4)"/><rect x="2075.3" y="1505.8" width="3.3" height="3.3" transform="rotate(-30 2077.0 1507.4)"/><rect x="2079.0" y="1505.8" width="3.3" height="3.3" transform="rotate(9 2080.7 1507.4)"/><rect x="2071.7" y="1509.5" width="3.3" height="3.3" transform="rotate(16 2073.3 1511.2)"/><rect x="2075.3" y="1509.5" width="3.3" height="3.3" transform="rotate(-33 2077.0 1511.2)"/><rect x="2079.0" y="1509.5" width="3.3" height="3.3" transform="rotate(18 2080.7 1511.2)"/><rect x="2071.7" y="1513.2" width="3.3" height="3.3" transform="rotate(29 2073.3 1514.9)"/><rect x="2075.3" y="1513.2" width="3.3" height="3.3" transform="rotate(44 2077.0 1514.9)"/><rect x="2079.0" y="1513.2" width="3.3" height="3.3" transform="rotate(-12 2080.7 1514.9)"/><rect x="2071.7" y="1517.0" width="3.3" height="3.3" transform="rotate(41 2073.3 1518.6)"/><rect x="2075.3" y="1517.0" width="3.3" height="3.3" transform="rotate(45 2077.0 1518.6)"/><rect x="2079.0" y="1517.0" width="3.3" height="3.3" transform="rotate(42 2080.7 1518.6)"/><rect x="2071.7" y="1520.7" width="3.3" height="3.3" transform="rotate(-28 2073.3 1522.3)"/><rect x="2075.3" y="1520.7" width="3.3" height="3.3" transform="rotate(-30 2077.0 1522.3)"/><rect x="2079.0" y="1520.7" width="3.3" height="3.3" transform="rotate(31 2080.7 1522.3)"/><rect x="2071.7" y="1524.4" width="3.3" height="3.3" transform="rotate(37 2073.3 1526.0)"/><rect x="2075.3" y="1524.4" width="3.3" height="3.3" transform="rotate(15 2077.0 1526.0)"/><rect x="2079.0" y="1524.4" width="3.3" height="3.3" transform="rotate(-22 2080.7 1526.0)"/><rect x="2071.7" y="1528.1" width="3.3" height="3.3" transform="rotate(36 2073.3 1529.8)"/><rect x="2075.3" y="1528.1" width="3.3" height="3.3" transform="rotate(25 2077.0 1529.8)"/><rect x="2079.0" y="1528.1" width="3.3" height="3.3" transform="rotate(-9 2080.7 1529.8)"/><rect x="2071.7" y="1531.8" width="3.3" height="3.3" transform="rotate(-11 2073.3 1533.5)"/><rect x="2075.3" y="1531.8" width="3.3" height="3.3" transform="rotate(33 2077.0 1533.5)"/><rect x="2079.0" y="1531.8" width="3.3" height="3.3" transform="rotate(11 2080.7 1533.5)"/><rect x="2071.7" y="1535.5" width="3.3" height="3.3" transform="rotate(-8 2073.3 1537.2)"/><rect x="2075.3" y="1535.5" width="3.3" height="3.3" transform="rotate(-38 2077.0 1537.2)"/><rect x="2079.0" y="1535.5" width="3.3" height="3.3" transform="rotate(30 2080.7 1537.2)"/><rect x="2071.7" y="1539.3" width="3.3" height="3.3" transform="rotate(9 2073.3 1540.9)"/><rect x="2075.3" y="1539.3" width="3.3" height="3.3" transform="rotate(16 2077.0 1540.9)"/><rect x="2079.0" y="1539.3" width="3.3" height="3.3" transform="rotate(24 2080.7 1540.9)"/><rect x="2071.7" y="1543.0" width="3.3" height="3.3" transform="rotate(38 2073.3 1544.6)"/><rect x="2075.3" y="1543.0" width="3.3" height="3.3" transform="rotate(45 2077.0 1544.6)"/><rect x="2079.0" y="1543.0" width="3.3" height="3.3" transform="rotate(-42 2080.7 1544.6)"/><rect x="2071.7" y="1546.7" width="3.3" height="3.3" transform="rotate(42 2073.3 1548.4)"/><rect x="2075.3" y="1546.7" width="3.3" height="3.3" transform="rotate(-37 2077.0 1548.4)"/><rect x="2079.0" y="1546.7" width="3.3" height="3.3" transform="rotate(10 2080.7 1548.4)"/><rect x="2086.4" y="1479.8" width="3.3" height="3.3" transform="rotate(-7 2088.0 1481.4)"/><rect x="2090.1" y="1479.8" width="3.3" height="3.3" transform="rotate(8 2091.7 1481.4)"/><rect x="2093.8" y="1479.8" width="3.3" height="3.3" transform="rotate(-34 2095.4 1481.4)"/><rect x="2086.4" y="1483.5" width="3.3" height="3.3" transform="rotate(45 2088.0 1485.1)"/><rect x="2090.1" y="1483.5" width="3.3" height="3.3" transform="rotate(-10 2091.7 1485.1)"/><rect x="2093.8" y="1483.5" width="3.3" height="3.3" transform="rotate(-33 2095.4 1485.1)"/><rect x="2086.4" y="1487.2" width="3.3" height="3.3" transform="rotate(0 2088.0 1488.8)"/><rect x="2090.1" y="1487.2" width="3.3" height="3.3" transform="rotate(-43 2091.7 1488.8)"/><rect x="2093.8" y="1487.2" width="3.3" height="3.3" transform="rotate(43 2095.4 1488.8)"/><rect x="2086.4" y="1490.9" width="3.3" height="3.3" transform="rotate(-34 2088.0 1492.6)"/><rect x="2090.1" y="1490.9" width="3.3" height="3.3" transform="rotate(3 2091.7 1492.6)"/><rect x="2093.8" y="1490.9" width="3.3" height="3.3" transform="rotate(-8 2095.4 1492.6)"/><rect x="2086.4" y="1494.6" width="3.3" height="3.3" transform="rotate(38 2088.0 1496.3)"/><rect x="2090.1" y="1494.6" width="3.3" height="3.3" transform="rotate(-15 2091.7 1496.3)"/><rect x="2093.8" y="1494.6" width="3.3" height="3.3" transform="rotate(-5 2095.4 1496.3)"/><rect x="2086.4" y="1498.3" width="3.3" height="3.3" transform="rotate(35 2088.0 1500.0)"/><rect x="2090.1" y="1498.3" width="3.3" height="3.3" transform="rotate(12 2091.7 1500.0)"/><rect x="2093.8" y="1498.3" width="3.3" height="3.3" transform="rotate(41 2095.4 1500.0)"/><rect x="2086.4" y="1502.1" width="3.3" height="3.3" transform="rotate(-36 2088.0 1503.7)"/><rect x="2090.1" y="1502.1" width="3.3" height="3.3" transform="rotate(13 2091.7 1503.7)"/><rect x="2093.8" y="1502.1" width="3.3" height="3.3" transform="rotate(25 2095.4 1503.7)"/><rect x="2086.4" y="1505.8" width="3.3" height="3.3" transform="rotate(0 2088.0 1507.4)"/><rect x="2090.1" y="1505.8" width="3.3" height="3.3" transform="rotate(26 2091.7 1507.4)"/><rect x="2093.8" y="1505.8" width="3.3" height="3.3" transform="rotate(-39 2095.4 1507.4)"/><rect x="2086.4" y="1509.5" width="3.3" height="3.3" transform="rotate(-21 2088.0 1511.2)"/><rect x="2090.1" y="1509.5" width="3.3" height="3.3" transform="rotate(18 2091.7 1511.2)"/><rect x="2093.8" y="1509.5" width="3.3" height="3.3" transform="rotate(-18 2095.4 1511.2)"/><rect x="2086.4" y="1513.2" width="3.3" height="3.3" transform="rotate(7 2088.0 1514.9)"/><rect x="2090.1" y="1513.2" width="3.3" height="3.3" transform="rotate(-21 2091.7 1514.9)"/><rect x="2093.8" y="1513.2" width="3.3" height="3.3" transform="rotate(17 2095.4 1514.9)"/><rect x="2086.4" y="1517.0" width="3.3" height="3.3" transform="rotate(24 2088.0 1518.6)"/><rect x="2090.1" y="1517.0" width="3.3" height="3.3" transform="rotate(16 2091.7 1518.6)"/><rect x="2093.8" y="1517.0" width="3.3" height="3.3" transform="rotate(-9 2095.4 1518.6)"/><rect x="2086.4" y="1520.7" width="3.3" height="3.3" transform="rotate(-34 2088.0 1522.3)"/><rect x="2090.1" y="1520.7" width="3.3" height="3.3" transform="rotate(27 2091.7 1522.3)"/><rect x="2093.8" y="1520.7" width="3.3" height="3.3" transform="rotate(14 2095.4 1522.3)"/><rect x="2086.4" y="1524.4" width="3.3" height="3.3" transform="rotate(-16 2088.0 1526.0)"/><rect x="2090.1" y="1524.4" width="3.3" height="3.3" transform="rotate(-41 2091.7 1526.0)"/><rect x="2093.8" y="1524.4" width="3.3" height="3.3" transform="rotate(-16 2095.4 1526.0)"/><rect x="2086.4" y="1528.1" width="3.3" height="3.3" transform="rotate(37 2088.0 1529.8)"/><rect x="2090.1" y="1528.1" width="3.3" height="3.3" transform="rotate(4 2091.7 1529.8)"/><rect x="2093.8" y="1528.1" width="3.3" height="3.3" transform="rotate(-36 2095.4 1529.8)"/><rect x="2086.4" y="1531.8" width="3.3" height="3.3" transform="rotate(-17 2088.0 1533.5)"/><rect x="2090.1" y="1531.8" width="3.3" height="3.3" transform="rotate(22 2091.7 1533.5)"/><rect x="2093.8" y="1531.8" width="3.3" height="3.3" transform="rotate(22 2095.4 1533.5)"/><rect x="2086.4" y="1535.5" width="3.3" height="3.3" transform="rotate(-16 2088.0 1537.2)"/><rect x="2090.1" y="1535.5" width="3.3" height="3.3" transform="rotate(45 2091.7 1537.2)"/><rect x="2093.8" y="1535.5" width="3.3" height="3.3" transform="rotate(27 2095.4 1537.2)"/><rect x="2086.4" y="1539.3" width="3.3" height="3.3" transform="rotate(-43 2088.0 1540.9)"/><rect x="2090.1" y="1539.3" width="3.3" height="3.3" transform="rotate(-11 2091.7 1540.9)"/><rect x="2093.8" y="1539.3" width="3.3" height="3.3" transform="rotate(17 2095.4 1540.9)"/><rect x="2086.4" y="1543.0" width="3.3" height="3.3" transform="rotate(5 2088.0 1544.6)"/><rect x="2090.1" y="1543.0" width="3.3" height="3.3" transform="rotate(34 2091.7 1544.6)"/><rect x="2093.8" y="1543.0" width="3.3" height="3.3" transform="rotate(22 2095.4 1544.6)"/><rect x="2086.4" y="1546.7" width="3.3" height="3.3" transform="rotate(-5 2088.0 1548.4)"/><rect x="2090.1" y="1546.7" width="3.3" height="3.3" transform="rotate(26 2091.7 1548.4)"/><rect x="2093.8" y="1546.7" width="3.3" height="3.3" transform="rotate(-10 2095.4 1548.4)"/></g></svg>
</div></body></html>
